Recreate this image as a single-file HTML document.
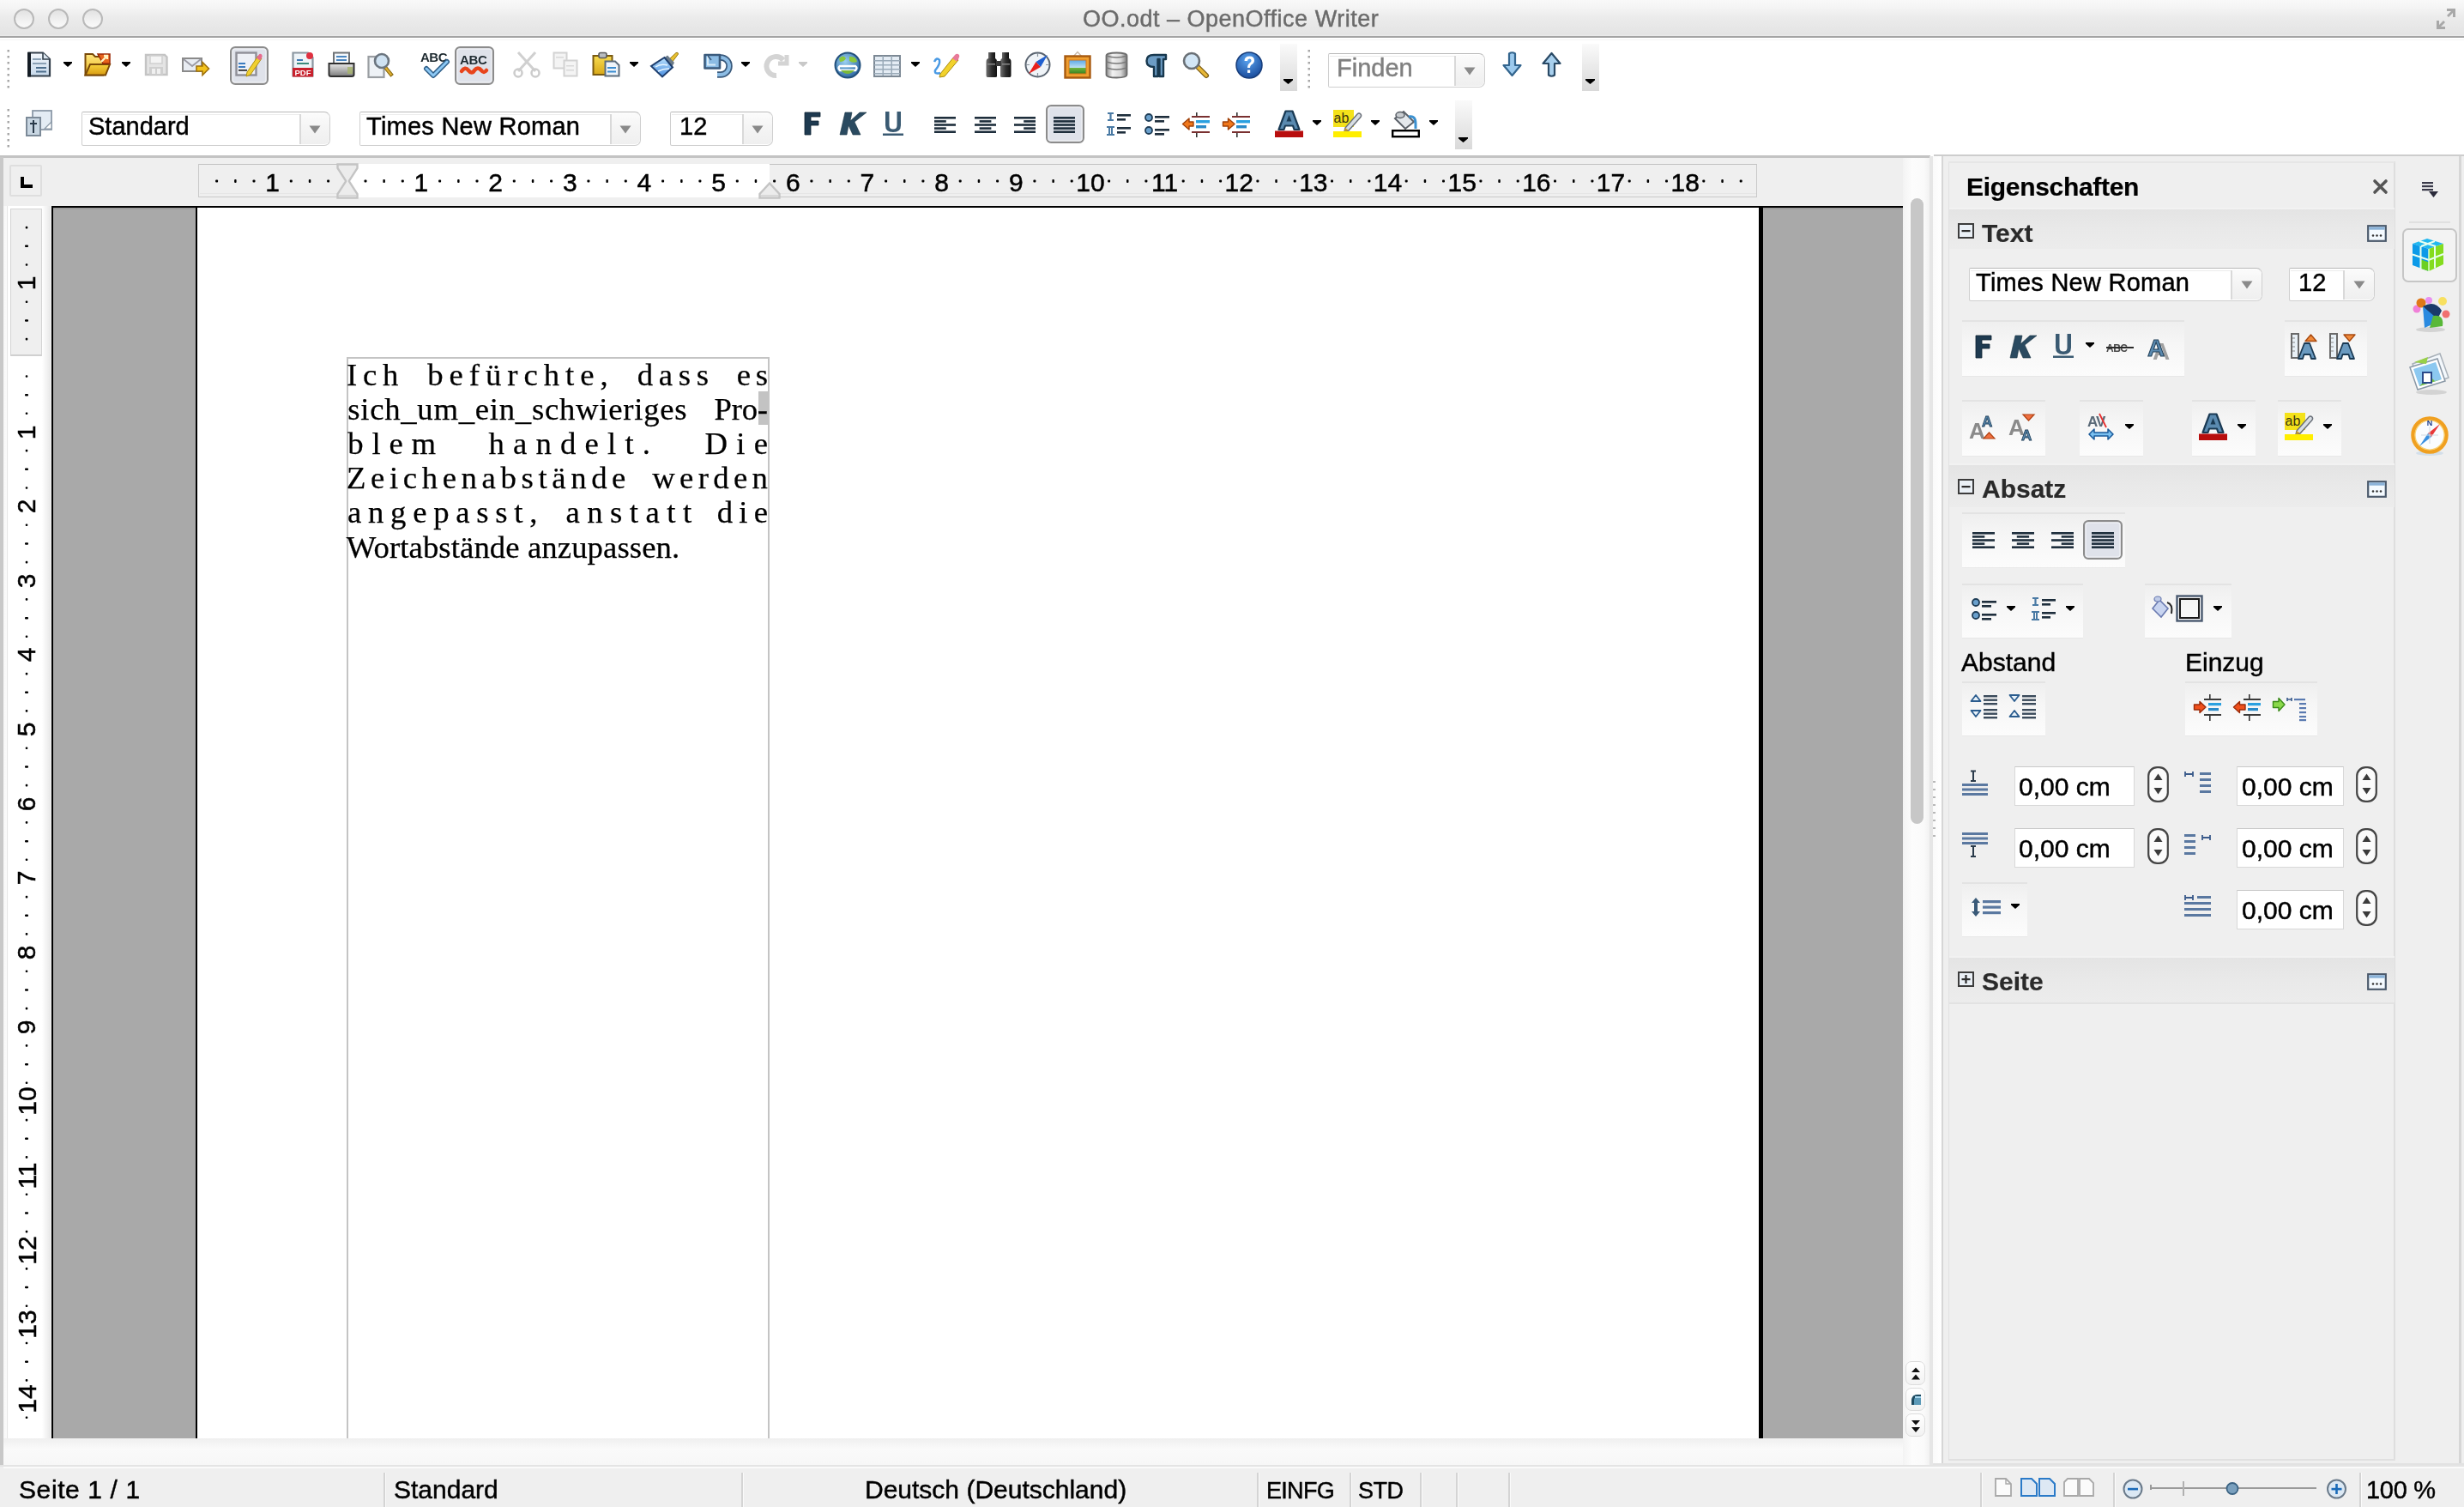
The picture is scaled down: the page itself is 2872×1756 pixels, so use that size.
<!DOCTYPE html>
<html><head><meta charset="utf-8">
<style>
*{box-sizing:border-box}
html,body{margin:0;padding:0}
body{width:2872px;height:1756px;overflow:hidden;position:relative;background:#fff;font-family:"Liberation Sans",sans-serif;color:#000}
.a{position:absolute}
svg.a{overflow:visible}
.t{position:absolute;white-space:nowrap;line-height:1}
</style></head><body>
<div class="a" style="left:0px;top:0px;width:2872px;height:42px;background:linear-gradient(#f9f9f9,#f3f3f3 25%,#ebebeb 50%,#e4e4e4 95%,#ebebeb)"></div>
<div class="a" style="left:0px;top:42px;width:2872px;height:2px;background:#a4a4a4"></div>
<div class="a" style="left:0px;top:46px;width:2872px;height:1px;background:#f4f4f4"></div>
<div class="a" style="left:16px;top:10px;width:24px;height:24px;border-radius:50%;border:2px solid #b9b9b9;background:linear-gradient(#e2e2e2,#f4f4f4 70%,#fafafa)"></div>
<div class="a" style="left:56px;top:10px;width:24px;height:24px;border-radius:50%;border:2px solid #b9b9b9;background:linear-gradient(#e2e2e2,#f4f4f4 70%,#fafafa)"></div>
<div class="a" style="left:96px;top:10px;width:24px;height:24px;border-radius:50%;border:2px solid #b9b9b9;background:linear-gradient(#e2e2e2,#f4f4f4 70%,#fafafa)"></div>
<div class="t" style="left:1262.00px;top:8.64px;font-size:27px;font-family:'Liberation Sans',sans-serif;font-weight:normal;color:#6b6b6b;letter-spacing:0.500px;-webkit-text-stroke:0.45px #6b6b6b;">OO.odt – OpenOffice Writer</div>
<svg class="a" style="left:2838px;top:8px;" width="26" height="28" viewBox="0 0 26 28"><path d="M2 26 L2 16 L5 16 L5 21 L10 16 L12 18 L7 23 L12 23 L12 26 Z" fill="#a8a8a8"/><path d="M24 2 L24 12 L21 12 L21 7 L16 12 L14 10 L19 5 L14 5 L14 2 Z" fill="#a8a8a8"/></svg>
<div class="a" style="left:0px;top:181px;width:2250px;height:3px;background:#c3c3c3"></div>
<div class="a" style="left:2254px;top:180px;width:618px;height:2px;background:#cdcdcd"></div>
<div class="a" style="left:0px;top:183px;width:4px;height:1524px;background:#c8c8c8"></div>
<div class="a" style="left:4px;top:184px;width:2214px;height:56px;background:#efefef"></div>
<div class="a" style="left:4px;top:240px;width:56px;height:1436px;background:linear-gradient(90deg,#f6f6f6,#ffffff 12%,#ffffff 80%,#ececec 95%,#e6e6e6 97%,#fafafa)"></div>
<div class="a" style="left:8px;top:240px;width:1px;height:1436px;background:#e6e6e6"></div>
<div class="a" style="left:60px;top:240px;width:2158px;height:2px;background:#000"></div>
<div class="a" style="left:60px;top:240px;width:2px;height:1436px;background:#000"></div>
<div class="a" style="left:62px;top:242px;width:2156px;height:1434px;background:#a9a9a9"></div>
<div class="a" style="left:62px;top:242px;width:2156px;height:2px;background:#9a9a9a"></div>
<div class="a" style="left:228px;top:242px;width:2px;height:1434px;background:#000"></div>
<div class="a" style="left:230px;top:242px;width:1820px;height:1434px;background:#fff"></div>
<div class="a" style="left:2050px;top:242px;width:5px;height:1434px;background:#000"></div>
<div class="a" style="left:404px;top:416px;width:1.5px;height:1260px;background:#c4c4c4"></div>
<div class="a" style="left:895px;top:416px;width:1.5px;height:1260px;background:#c4c4c4"></div>
<div class="a" style="left:404px;top:416px;width:492.5px;height:1.5px;background:#c4c4c4"></div>
<div class="a" style="left:2218px;top:184px;width:31px;height:1523px;background:linear-gradient(90deg,#f3f3f3,#fcfcfc 35%,#fafafa 80%,#f1f1f1)"></div>
<div class="a" style="left:2227px;top:231px;width:15px;height:729px;border-radius:8px;background:#c7c7c7"></div>
<div class="a" style="left:2221px;top:1586px;width:23px;height:28px;border-radius:7px;background:linear-gradient(#ffffff,#f2f2f2);border:1.5px solid #dcdcdc"></div>
<div class="a" style="left:2221px;top:1617px;width:23px;height:27px;border-radius:7px;background:linear-gradient(#ffffff,#f2f2f2);border:1.5px solid #dcdcdc"></div>
<div class="a" style="left:2221px;top:1647px;width:23px;height:27px;border-radius:7px;background:linear-gradient(#ffffff,#f2f2f2);border:1.5px solid #dcdcdc"></div>
<svg class="a" style="left:2227px;top:1593px;" width="12" height="16" viewBox="0 0 12 16"><path d="M6 0.5 L11 6 H1 Z M6 8.5 L11 14.5 H1 Z" fill="#111"/></svg>
<svg class="a" style="left:2227px;top:1623px;" width="13" height="15" viewBox="0 0 13 15"><path d="M1 14 L1 8 Q2 2 8 2 L12 2 L12 14 Z" fill="#5c9ab8"/><path d="M1 8 Q2 2 8 2 L12 2 L12 5 L7 5 Q4 5 4 9 L4 14 L1 14Z" fill="#1e4a60"/><rect x="5" y="4" width="7" height="2" fill="#a8d8f0"/></svg>
<svg class="a" style="left:2227px;top:1654px;" width="12" height="16" viewBox="0 0 12 16"><path d="M1 1 H11 L6 6.5 Z M1 9 H11 L6 15 Z" fill="#111"/></svg>
<div class="a" style="left:4px;top:1676px;width:2214px;height:31px;background:linear-gradient(#efefef,#fafafa 40%,#f7f7f7)"></div>
<div class="a" style="left:11px;top:192px;width:38px;height:37px;background:#efefef;border:2px solid #dedede;border-radius:2px"></div>
<svg class="a" style="left:23px;top:206px;" width="16" height="14" viewBox="0 0 16 14"><path d="M1 0 L5 0 L5 9 L15 9 L15 13 L1 13 Z" fill="#000"/></svg>
<div class="a" style="left:231px;top:190.5px;width:1817px;height:39px;background:#efefef;border:1.5px solid #c9c9c9;border-top-color:#c2c2c2"></div>
<div class="a" style="left:232.5px;top:224.5px;width:1814px;height:1px;background:#e6e6e6"></div>
<div class="a" style="left:405px;top:191px;width:492px;height:39px;background:#fff"></div>
<div class="t" style="left:309.30px;top:197.60px;font-size:30px;font-family:'Liberation Sans',sans-serif;font-weight:normal;color:#000;-webkit-text-stroke:0.5px #000;">1</div>
<div class="t" style="left:482.62px;top:197.60px;font-size:30px;font-family:'Liberation Sans',sans-serif;font-weight:normal;color:#000;-webkit-text-stroke:0.5px #000;">1</div>
<div class="t" style="left:569.28px;top:197.60px;font-size:30px;font-family:'Liberation Sans',sans-serif;font-weight:normal;color:#000;-webkit-text-stroke:0.5px #000;">2</div>
<div class="t" style="left:655.94px;top:197.60px;font-size:30px;font-family:'Liberation Sans',sans-serif;font-weight:normal;color:#000;-webkit-text-stroke:0.5px #000;">3</div>
<div class="t" style="left:742.60px;top:197.60px;font-size:30px;font-family:'Liberation Sans',sans-serif;font-weight:normal;color:#000;-webkit-text-stroke:0.5px #000;">4</div>
<div class="t" style="left:829.26px;top:197.60px;font-size:30px;font-family:'Liberation Sans',sans-serif;font-weight:normal;color:#000;-webkit-text-stroke:0.5px #000;">5</div>
<div class="t" style="left:915.92px;top:197.60px;font-size:30px;font-family:'Liberation Sans',sans-serif;font-weight:normal;color:#000;-webkit-text-stroke:0.5px #000;">6</div>
<div class="t" style="left:1002.58px;top:197.60px;font-size:30px;font-family:'Liberation Sans',sans-serif;font-weight:normal;color:#000;-webkit-text-stroke:0.5px #000;">7</div>
<div class="t" style="left:1089.24px;top:197.60px;font-size:30px;font-family:'Liberation Sans',sans-serif;font-weight:normal;color:#000;-webkit-text-stroke:0.5px #000;">8</div>
<div class="t" style="left:1175.90px;top:197.60px;font-size:30px;font-family:'Liberation Sans',sans-serif;font-weight:normal;color:#000;-webkit-text-stroke:0.5px #000;">9</div>
<div class="t" style="left:1254.22px;top:197.60px;font-size:30px;font-family:'Liberation Sans',sans-serif;font-weight:normal;color:#000;-webkit-text-stroke:0.5px #000;">10</div>
<div class="t" style="left:1341.99px;top:197.60px;font-size:30px;font-family:'Liberation Sans',sans-serif;font-weight:normal;color:#000;-webkit-text-stroke:0.5px #000;">11</div>
<div class="t" style="left:1427.54px;top:197.60px;font-size:30px;font-family:'Liberation Sans',sans-serif;font-weight:normal;color:#000;-webkit-text-stroke:0.5px #000;">12</div>
<div class="t" style="left:1514.20px;top:197.60px;font-size:30px;font-family:'Liberation Sans',sans-serif;font-weight:normal;color:#000;-webkit-text-stroke:0.5px #000;">13</div>
<div class="t" style="left:1600.86px;top:197.60px;font-size:30px;font-family:'Liberation Sans',sans-serif;font-weight:normal;color:#000;-webkit-text-stroke:0.5px #000;">14</div>
<div class="t" style="left:1687.52px;top:197.60px;font-size:30px;font-family:'Liberation Sans',sans-serif;font-weight:normal;color:#000;-webkit-text-stroke:0.5px #000;">15</div>
<div class="t" style="left:1774.18px;top:197.60px;font-size:30px;font-family:'Liberation Sans',sans-serif;font-weight:normal;color:#000;-webkit-text-stroke:0.5px #000;">16</div>
<div class="t" style="left:1860.84px;top:197.60px;font-size:30px;font-family:'Liberation Sans',sans-serif;font-weight:normal;color:#000;-webkit-text-stroke:0.5px #000;">17</div>
<div class="t" style="left:1947.50px;top:197.60px;font-size:30px;font-family:'Liberation Sans',sans-serif;font-weight:normal;color:#000;-webkit-text-stroke:0.5px #000;">18</div>
<svg class="a" style="left:231px;top:200px;" width="1817" height="22" viewBox="0 0 1817 22"><g fill="#000"><rect x="20.1" y="9.5" width="3" height="3" rx="1"/><rect x="42.1" y="9" width="2.5" height="4" rx="1"/><rect x="63.5" y="9.5" width="3" height="3" rx="1"/><rect x="106.8" y="9.5" width="3" height="3" rx="1"/><rect x="128.8" y="9" width="2.5" height="4" rx="1"/><rect x="150.1" y="9.5" width="3" height="3" rx="1"/><rect x="193.5" y="9.5" width="3" height="3" rx="1"/><rect x="215.4" y="9" width="2.5" height="4" rx="1"/><rect x="236.8" y="9.5" width="3" height="3" rx="1"/><rect x="280.1" y="9.5" width="3" height="3" rx="1"/><rect x="302.1" y="9" width="2.5" height="4" rx="1"/><rect x="323.5" y="9.5" width="3" height="3" rx="1"/><rect x="366.8" y="9.5" width="3" height="3" rx="1"/><rect x="388.8" y="9" width="2.5" height="4" rx="1"/><rect x="410.1" y="9.5" width="3" height="3" rx="1"/><rect x="453.4" y="9.5" width="3" height="3" rx="1"/><rect x="475.4" y="9" width="2.5" height="4" rx="1"/><rect x="496.8" y="9.5" width="3" height="3" rx="1"/><rect x="540.1" y="9.5" width="3" height="3" rx="1"/><rect x="562.1" y="9" width="2.5" height="4" rx="1"/><rect x="583.4" y="9.5" width="3" height="3" rx="1"/><rect x="626.8" y="9.5" width="3" height="3" rx="1"/><rect x="648.7" y="9" width="2.5" height="4" rx="1"/><rect x="670.1" y="9.5" width="3" height="3" rx="1"/><rect x="713.4" y="9.5" width="3" height="3" rx="1"/><rect x="735.4" y="9" width="2.5" height="4" rx="1"/><rect x="756.8" y="9.5" width="3" height="3" rx="1"/><rect x="800.1" y="9.5" width="3" height="3" rx="1"/><rect x="822.0" y="9" width="2.5" height="4" rx="1"/><rect x="843.4" y="9.5" width="3" height="3" rx="1"/><rect x="886.7" y="9.5" width="3" height="3" rx="1"/><rect x="908.7" y="9" width="2.5" height="4" rx="1"/><rect x="930.1" y="9.5" width="3" height="3" rx="1"/><rect x="973.4" y="9.5" width="3" height="3" rx="1"/><rect x="995.4" y="9" width="2.5" height="4" rx="1"/><rect x="1016.7" y="9.5" width="3" height="3" rx="1"/><rect x="1060.1" y="9.5" width="3" height="3" rx="1"/><rect x="1082.0" y="9" width="2.5" height="4" rx="1"/><rect x="1103.4" y="9.5" width="3" height="3" rx="1"/><rect x="1146.7" y="9.5" width="3" height="3" rx="1"/><rect x="1168.7" y="9" width="2.5" height="4" rx="1"/><rect x="1190.1" y="9.5" width="3" height="3" rx="1"/><rect x="1233.4" y="9.5" width="3" height="3" rx="1"/><rect x="1255.3" y="9" width="2.5" height="4" rx="1"/><rect x="1276.7" y="9.5" width="3" height="3" rx="1"/><rect x="1320.0" y="9.5" width="3" height="3" rx="1"/><rect x="1342.0" y="9" width="2.5" height="4" rx="1"/><rect x="1363.4" y="9.5" width="3" height="3" rx="1"/><rect x="1406.7" y="9.5" width="3" height="3" rx="1"/><rect x="1428.7" y="9" width="2.5" height="4" rx="1"/><rect x="1450.0" y="9.5" width="3" height="3" rx="1"/><rect x="1493.4" y="9.5" width="3" height="3" rx="1"/><rect x="1515.3" y="9" width="2.5" height="4" rx="1"/><rect x="1536.7" y="9.5" width="3" height="3" rx="1"/><rect x="1580.0" y="9.5" width="3" height="3" rx="1"/><rect x="1602.0" y="9" width="2.5" height="4" rx="1"/><rect x="1623.4" y="9.5" width="3" height="3" rx="1"/><rect x="1666.7" y="9.5" width="3" height="3" rx="1"/><rect x="1688.6" y="9" width="2.5" height="4" rx="1"/><rect x="1710.0" y="9.5" width="3" height="3" rx="1"/><rect x="1753.3" y="9.5" width="3" height="3" rx="1"/><rect x="1775.3" y="9" width="2.5" height="4" rx="1"/><rect x="1796.7" y="9.5" width="3" height="3" rx="1"/></g></svg>
<svg class="a" style="left:392px;top:190px;" width="26" height="42" viewBox="0 0 26 42"><path d="M1.5 1.5 L24.5 1.5 L24.5 6 L15 20.5 L15 21.5 L24.5 36 L24.5 40.5 L1.5 40.5 L1.5 36 L11 21.5 L11 20.5 L1.5 6 Z" fill="#ececec" stroke="#c4c4c4" stroke-width="2.4"/><path d="M3 37 L23 37 L23 40 L3 40 Z" fill="#d8d8d8"/></svg>
<svg class="a" style="left:884px;top:212px;" width="26" height="20" viewBox="0 0 26 20"><path d="M13 1.5 L24.5 14 L24.5 18.5 L1.5 18.5 L1.5 14 Z" fill="#ececec" stroke="#c4c4c4" stroke-width="2.4"/><path d="M3 15 L23 15 L23 18 L3 18 Z" fill="#d8d8d8"/></svg>
<div class="a" style="left:12px;top:243px;width:36.5px;height:172px;background:#efefef;border:1.5px solid #d4d4d4;border-bottom:2px solid #d0d0d0"></div>
<div class="t" style="left:23.2px;top:315.1px;font-size:30px;width:16.7px;height:30px;transform:rotate(-90deg);transform-origin:8.3px 15px;line-height:30px;-webkit-text-stroke:0.5px #000">1</div>
<div class="t" style="left:23.2px;top:488.5px;font-size:30px;width:16.7px;height:30px;transform:rotate(-90deg);transform-origin:8.3px 15px;line-height:30px;-webkit-text-stroke:0.5px #000">1</div>
<div class="t" style="left:23.2px;top:575.1px;font-size:30px;width:16.7px;height:30px;transform:rotate(-90deg);transform-origin:8.3px 15px;line-height:30px;-webkit-text-stroke:0.5px #000">2</div>
<div class="t" style="left:23.2px;top:661.8px;font-size:30px;width:16.7px;height:30px;transform:rotate(-90deg);transform-origin:8.3px 15px;line-height:30px;-webkit-text-stroke:0.5px #000">3</div>
<div class="t" style="left:23.2px;top:748.4px;font-size:30px;width:16.7px;height:30px;transform:rotate(-90deg);transform-origin:8.3px 15px;line-height:30px;-webkit-text-stroke:0.5px #000">4</div>
<div class="t" style="left:23.2px;top:835.1px;font-size:30px;width:16.7px;height:30px;transform:rotate(-90deg);transform-origin:8.3px 15px;line-height:30px;-webkit-text-stroke:0.5px #000">5</div>
<div class="t" style="left:23.2px;top:921.8px;font-size:30px;width:16.7px;height:30px;transform:rotate(-90deg);transform-origin:8.3px 15px;line-height:30px;-webkit-text-stroke:0.5px #000">6</div>
<div class="t" style="left:23.2px;top:1008.4px;font-size:30px;width:16.7px;height:30px;transform:rotate(-90deg);transform-origin:8.3px 15px;line-height:30px;-webkit-text-stroke:0.5px #000">7</div>
<div class="t" style="left:23.2px;top:1095.1px;font-size:30px;width:16.7px;height:30px;transform:rotate(-90deg);transform-origin:8.3px 15px;line-height:30px;-webkit-text-stroke:0.5px #000">8</div>
<div class="t" style="left:23.2px;top:1181.7px;font-size:30px;width:16.7px;height:30px;transform:rotate(-90deg);transform-origin:8.3px 15px;line-height:30px;-webkit-text-stroke:0.5px #000">9</div>
<div class="t" style="left:14.8px;top:1268.4px;font-size:30px;width:33.4px;height:30px;transform:rotate(-90deg);transform-origin:16.7px 15px;line-height:30px;-webkit-text-stroke:0.5px #000">10</div>
<div class="t" style="left:15.9px;top:1355.1px;font-size:30px;width:31.1px;height:30px;transform:rotate(-90deg);transform-origin:15.6px 15px;line-height:30px;-webkit-text-stroke:0.5px #000">11</div>
<div class="t" style="left:14.8px;top:1441.7px;font-size:30px;width:33.4px;height:30px;transform:rotate(-90deg);transform-origin:16.7px 15px;line-height:30px;-webkit-text-stroke:0.5px #000">12</div>
<div class="t" style="left:14.8px;top:1528.4px;font-size:30px;width:33.4px;height:30px;transform:rotate(-90deg);transform-origin:16.7px 15px;line-height:30px;-webkit-text-stroke:0.5px #000">13</div>
<div class="t" style="left:14.8px;top:1615.0px;font-size:30px;width:33.4px;height:30px;transform:rotate(-90deg);transform-origin:16.7px 15px;line-height:30px;-webkit-text-stroke:0.5px #000">14</div>
<svg class="a" style="left:20px;top:243px;" width="22" height="1433" viewBox="0 0 22 1433"><g fill="#000"><rect x="9.7" y="20.8" width="2.6" height="2.6" rx="1"/><rect x="9" y="42.6" width="4" height="2.5" rx="1"/><rect x="9.7" y="64.2" width="2.6" height="2.6" rx="1"/><rect x="9.7" y="107.5" width="2.6" height="2.6" rx="1"/><rect x="9" y="129.3" width="4" height="2.5" rx="1"/><rect x="9.7" y="150.8" width="2.6" height="2.6" rx="1"/><rect x="9.7" y="194.2" width="2.6" height="2.6" rx="1"/><rect x="9" y="215.9" width="4" height="2.5" rx="1"/><rect x="9.7" y="237.5" width="2.6" height="2.6" rx="1"/><rect x="9.7" y="280.8" width="2.6" height="2.6" rx="1"/><rect x="9" y="302.6" width="4" height="2.5" rx="1"/><rect x="9.7" y="324.2" width="2.6" height="2.6" rx="1"/><rect x="9.7" y="367.5" width="2.6" height="2.6" rx="1"/><rect x="9" y="389.2" width="4" height="2.5" rx="1"/><rect x="9.7" y="410.8" width="2.6" height="2.6" rx="1"/><rect x="9.7" y="454.1" width="2.6" height="2.6" rx="1"/><rect x="9" y="475.9" width="4" height="2.5" rx="1"/><rect x="9.7" y="497.5" width="2.6" height="2.6" rx="1"/><rect x="9.7" y="540.8" width="2.6" height="2.6" rx="1"/><rect x="9" y="562.6" width="4" height="2.5" rx="1"/><rect x="9.7" y="584.1" width="2.6" height="2.6" rx="1"/><rect x="9.7" y="627.5" width="2.6" height="2.6" rx="1"/><rect x="9" y="649.2" width="4" height="2.5" rx="1"/><rect x="9.7" y="670.8" width="2.6" height="2.6" rx="1"/><rect x="9.7" y="714.1" width="2.6" height="2.6" rx="1"/><rect x="9" y="735.9" width="4" height="2.5" rx="1"/><rect x="9.7" y="757.5" width="2.6" height="2.6" rx="1"/><rect x="9.7" y="800.8" width="2.6" height="2.6" rx="1"/><rect x="9" y="822.5" width="4" height="2.5" rx="1"/><rect x="9.7" y="844.1" width="2.6" height="2.6" rx="1"/><rect x="9.7" y="887.4" width="2.6" height="2.6" rx="1"/><rect x="9" y="909.2" width="4" height="2.5" rx="1"/><rect x="9.7" y="930.8" width="2.6" height="2.6" rx="1"/><rect x="9.7" y="974.1" width="2.6" height="2.6" rx="1"/><rect x="9" y="995.9" width="4" height="2.5" rx="1"/><rect x="9.7" y="1017.4" width="2.6" height="2.6" rx="1"/><rect x="9.7" y="1060.8" width="2.6" height="2.6" rx="1"/><rect x="9" y="1082.5" width="4" height="2.5" rx="1"/><rect x="9.7" y="1104.1" width="2.6" height="2.6" rx="1"/><rect x="9.7" y="1147.4" width="2.6" height="2.6" rx="1"/><rect x="9" y="1169.2" width="4" height="2.5" rx="1"/><rect x="9.7" y="1190.8" width="2.6" height="2.6" rx="1"/><rect x="9.7" y="1234.1" width="2.6" height="2.6" rx="1"/><rect x="9" y="1255.8" width="4" height="2.5" rx="1"/><rect x="9.7" y="1277.4" width="2.6" height="2.6" rx="1"/><rect x="9.7" y="1320.7" width="2.6" height="2.6" rx="1"/><rect x="9" y="1342.5" width="4" height="2.5" rx="1"/><rect x="9.7" y="1364.1" width="2.6" height="2.6" rx="1"/><rect x="9.7" y="1407.4" width="2.6" height="2.6" rx="1"/></g></svg>
<div class="t" style="left:404.10px;top:418.57px;font-size:36.7px;font-family:'Liberation Serif',serif;font-weight:normal;color:#000;letter-spacing:6.700px;-webkit-text-stroke:0.25px #000;">Ich</div>
<div class="t" style="left:498.30px;top:418.57px;font-size:36.7px;font-family:'Liberation Serif',serif;font-weight:normal;color:#000;letter-spacing:6.967px;-webkit-text-stroke:0.25px #000;">befürchte,</div>
<div class="t" style="left:742.70px;top:418.57px;font-size:36.7px;font-family:'Liberation Serif',serif;font-weight:normal;color:#000;letter-spacing:6.700px;-webkit-text-stroke:0.25px #000;">dass</div>
<div class="t" style="left:858.80px;top:418.57px;font-size:36.7px;font-family:'Liberation Serif',serif;font-weight:normal;color:#000;letter-spacing:5.600px;-webkit-text-stroke:0.25px #000;">es</div>
<div class="t" style="left:405.20px;top:458.87px;font-size:36.7px;font-family:'Liberation Serif',serif;font-weight:normal;color:#000;letter-spacing:0.745px;-webkit-text-stroke:0.25px #000;">sich_um_ein_schwieriges</div>
<div class="t" style="left:832.60px;top:458.87px;font-size:36.7px;font-family:'Liberation Serif',serif;font-weight:normal;color:#000;letter-spacing:-0.267px;-webkit-text-stroke:0.25px #000;">Pro-</div>
<div class="t" style="left:405.20px;top:498.87px;font-size:36.7px;font-family:'Liberation Serif',serif;font-weight:normal;color:#000;letter-spacing:9.867px;-webkit-text-stroke:0.25px #000;">blem</div>
<div class="t" style="left:569.60px;top:498.87px;font-size:36.7px;font-family:'Liberation Serif',serif;font-weight:normal;color:#000;letter-spacing:10.171px;-webkit-text-stroke:0.25px #000;">handelt.</div>
<div class="t" style="left:821.60px;top:498.87px;font-size:36.7px;font-family:'Liberation Serif',serif;font-weight:normal;color:#000;letter-spacing:10.200px;-webkit-text-stroke:0.25px #000;">Die</div>
<div class="t" style="left:404.00px;top:539.17px;font-size:36.7px;font-family:'Liberation Serif',serif;font-weight:normal;color:#000;letter-spacing:5.636px;-webkit-text-stroke:0.25px #000;">Zeichenabstände</div>
<div class="t" style="left:760.20px;top:539.17px;font-size:36.7px;font-family:'Liberation Serif',serif;font-weight:normal;color:#000;letter-spacing:5.360px;-webkit-text-stroke:0.25px #000;">werden</div>
<div class="t" style="left:405.00px;top:579.47px;font-size:36.7px;font-family:'Liberation Serif',serif;font-weight:normal;color:#000;letter-spacing:7.733px;-webkit-text-stroke:0.25px #000;">angepasst,</div>
<div class="t" style="left:659.40px;top:579.47px;font-size:36.7px;font-family:'Liberation Serif',serif;font-weight:normal;color:#000;letter-spacing:8.517px;-webkit-text-stroke:0.25px #000;">anstatt</div>
<div class="t" style="left:835.80px;top:579.47px;font-size:36.7px;font-family:'Liberation Serif',serif;font-weight:normal;color:#000;letter-spacing:7.200px;-webkit-text-stroke:0.25px #000;">die</div>
<div class="a" style="left:884px;top:456px;width:11px;height:39px;background:#c3c3c3;mix-blend-mode:multiply"></div>
<div class="t" style="left:403.70px;top:619.87px;font-size:36.7px;font-family:'Liberation Serif',serif;font-weight:normal;color:#000;letter-spacing:0.100px;-webkit-text-stroke:0.25px #000;">Wortabstände anzupassen.</div>
<svg class="a" style="left:8px;top:58px;" width="3" height="44" viewBox="0 0 3 44"><rect x="0.5" y="0" width="2.5" height="2.5" fill="#a8a8a8"/><rect x="0.5" y="7" width="2.5" height="2.5" fill="#a8a8a8"/><rect x="0.5" y="14" width="2.5" height="2.5" fill="#a8a8a8"/><rect x="0.5" y="21" width="2.5" height="2.5" fill="#a8a8a8"/><rect x="0.5" y="28" width="2.5" height="2.5" fill="#a8a8a8"/><rect x="0.5" y="35" width="2.5" height="2.5" fill="#a8a8a8"/><rect x="0.5" y="42" width="2.5" height="2.5" fill="#a8a8a8"/></svg>
<svg class="a" style="left:32px;top:60px;" width="28" height="30" viewBox="0 0 28 30"><defs><linearGradient id="g1" x1="0" y1="0" x2="0" y2="1"><stop offset="0" stop-color="#f4f8fc"/><stop offset="1" stop-color="#c6d8ea"/></linearGradient></defs><path d="M1.5 1.5 H18 L26 9 V28.5 H1.5 Z" fill="url(#g1)" stroke="#34404c" stroke-width="2.2"/><path d="M18 1.5 V9 H26" fill="#dbe6f0" stroke="#34404c" stroke-width="1.6"/><rect x="0" y="1" width="4" height="28.5" fill="#141c24"/><rect x="6" y="8" width="10" height="2" fill="#8aa0b4"/><rect x="6" y="13" width="16" height="2" fill="#8aa0b4"/><rect x="10" y="18" width="12" height="2" fill="#4d6e8c"/><rect x="10" y="22.5" width="12" height="2" fill="#4d6e8c"/></svg>
<svg class="a" style="left:74px;top:72px;" width="10" height="6" viewBox="0 0 10 6"><path d="M0 0 H10 V1.5 L5 6 L0 1.5 Z" fill="#000"/></svg>
<svg class="a" style="left:98px;top:60px;" width="32" height="30" viewBox="0 0 32 30"><defs><linearGradient id="g2" x1="0" y1="0" x2="0" y2="1"><stop offset="0" stop-color="#ffe680"/><stop offset="1" stop-color="#e9b820"/></linearGradient><linearGradient id="g3" x1="0" y1="0" x2="0" y2="1"><stop offset="0" stop-color="#f6d23c"/><stop offset="1" stop-color="#d99c12"/></linearGradient></defs><path d="M1.5 3 H10 L13 6 H22 V27.5 H1.5 Z" fill="url(#g2)" stroke="#7a4a08" stroke-width="2"/><path d="M1.5 27.5 L7 15 H30 L25 27.5 Z" fill="url(#g3)" stroke="#7a4a08" stroke-width="2"/><path d="M16 3 H30 V14 H22 Z" fill="#e8641c" stroke="#9a2a08" stroke-width="1.5"/><path d="M20 12 L27 5 M23 5 H27 V9" stroke="#fff2c0" stroke-width="2.4" fill="none"/></svg>
<svg class="a" style="left:142px;top:72px;" width="10" height="6" viewBox="0 0 10 6"><path d="M0 0 H10 V1.5 L5 6 L0 1.5 Z" fill="#000"/></svg>
<svg class="a" style="left:168px;top:62px;" width="28" height="27" viewBox="0 0 28 27"><path d="M2 2 H24 L26.5 4.5 V25 H2 Z" fill="#e4e4e4" stroke="#c4c4c4" stroke-width="2.4"/><rect x="7" y="3" width="14" height="9" fill="#f4f4f4" stroke="#cfcfcf" stroke-width="1.5"/><rect x="6" y="16" width="16" height="9" fill="#cfcfcf"/><rect x="9" y="18" width="4" height="6" fill="#f0f0f0"/><rect x="15" y="18" width="4" height="6" fill="#f0f0f0"/></svg>
<svg class="a" style="left:212px;top:67px;" width="32" height="22" viewBox="0 0 32 22"><rect x="1" y="1" width="22" height="15" fill="#e8ecf2" stroke="#8a8a8a" stroke-width="2"/><path d="M2 2 L12 10 L22 2" fill="none" stroke="#9a9aa4" stroke-width="1.8"/><path d="M17 10 H24 V5.5 L31.5 13 L24 20.5 V16 H17 Z" fill="#f2c21c" stroke="#a0720c" stroke-width="1.6"/></svg>
<svg class="a" style="left:268px;top:54px;" width="45" height="45" viewBox="0 0 45 45"><rect x="1.2" y="1.2" width="42.6" height="42.6" rx="5" fill="#dfe2ea" stroke="#8c8c8c" stroke-width="2.4"/><rect x="3" y="3" width="39" height="39" rx="3" fill="none" stroke="#eef0f4" stroke-width="1.5"/></svg>
<svg class="a" style="left:274px;top:60px;" width="32" height="30" viewBox="0 0 32 30"><rect x="1.5" y="1.5" width="23" height="26" fill="#eef0f6" stroke="#8f8f98" stroke-width="2.4"/><rect x="4" y="13" width="8" height="2" fill="#3c7cc0"/><rect x="4" y="17" width="8" height="2" fill="#3c7cc0"/><rect x="4" y="21" width="10" height="1.8" fill="#333"/><path d="M14 24 L27 5 L31 8 L18 27 L13 29 Z" fill="#f0d030" stroke="#b09010" stroke-width="1"/><path d="M25 7.5 L27.5 4 Q29 2 31 3.5 Q32.5 5 31 7.5 L29 10.5 Z" fill="#e76b8e"/></svg>
<svg class="a" style="left:340px;top:60px;" width="26" height="30" viewBox="0 0 26 30"><path d="M1.5 1.5 H19 L24.5 7 V28.5 H1.5 Z" fill="#eef4f8" stroke="#8a96a0" stroke-width="2.2"/><circle cx="21" cy="5" r="4" fill="#e03040"/><rect x="6" y="9" width="7" height="2" fill="#3c78b4"/><rect x="6" y="13" width="14" height="2" fill="#3a8a7c"/><rect x="1" y="19" width="24" height="10.5" fill="#c8202c"/><text x="13" y="28" font-family="Liberation Sans" font-weight="bold" font-size="9.5" fill="#fff" text-anchor="middle">PDF</text></svg>
<svg class="a" style="left:382px;top:60px;" width="32" height="30" viewBox="0 0 32 30"><defs><linearGradient id="g4" x1="0" y1="0" x2="0" y2="1"><stop offset="0" stop-color="#e8e8e8"/><stop offset="0.5" stop-color="#b4b4b4"/><stop offset="1" stop-color="#7a7a7a"/></linearGradient></defs><rect x="7" y="1.5" width="18" height="14" fill="#f4f8fc" stroke="#6e7276" stroke-width="2"/><rect x="10" y="5" width="12" height="2" fill="#4a86c0"/><rect x="10" y="9" width="12" height="2" fill="#4a86c0"/><path d="M1.5 14 H30.5 V27 Q30.5 29 28 29 H4 Q1.5 29 1.5 27 Z" fill="url(#g4)" stroke="#303030" stroke-width="2"/><rect x="23" y="18" width="6" height="8" fill="#a6b46a" opacity="0.8"/></svg>
<svg class="a" style="left:428px;top:61px;" width="32" height="30" viewBox="0 0 32 30"><rect x="1.5" y="5" width="18" height="24" fill="#eef2f6" stroke="#9a9ea2" stroke-width="2.2"/><path d="M22 16 L30 26 L27.5 28 L19.5 18 Z" fill="#e0b030" stroke="#8a6a10" stroke-width="1.2"/><circle cx="17" cy="10" r="8" fill="#cfe2f2" stroke="#6c7680" stroke-width="2.6"/></svg>
<svg class="a" style="left:490px;top:60px;" width="32" height="30" viewBox="0 0 32 30"><text x="0" y="12" font-family="Liberation Sans" font-weight="bold" font-size="15" fill="#1e2a30" letter-spacing="-0.5">ABC</text><path d="M7 20 L15 28 L31 12" fill="none" stroke="#2c5c86" stroke-width="6" stroke-linejoin="round" stroke-linecap="round"/><path d="M7 20 L15 28 L31 12" fill="none" stroke="#8cc8f4" stroke-width="3" stroke-linejoin="round" stroke-linecap="round"/></svg>
<svg class="a" style="left:530px;top:54px;" width="46" height="45" viewBox="0 0 46 45"><rect x="1.2" y="1.2" width="43.6" height="42.6" rx="5" fill="#dfe2ea" stroke="#8c8c8c" stroke-width="2.4"/><rect x="3" y="3" width="40" height="39" rx="3" fill="none" stroke="#eef0f4" stroke-width="1.5"/></svg>
<svg class="a" style="left:536px;top:63px;" width="32" height="26" viewBox="0 0 32 26"><text x="0" y="12" font-family="Liberation Sans" font-weight="bold" font-size="15" fill="#1e2a30" letter-spacing="-0.3">ABC</text><path d="M2 20 Q6 14 10 19 Q14 24 17 19 Q21 14 25 19 Q28 23 31 19" fill="none" stroke="#e8441c" stroke-width="4.5" stroke-linecap="round"/></svg>
<svg class="a" style="left:598px;top:59px;" width="32" height="32" viewBox="0 0 32 32"><path d="M6 2 L26 24 M26 2 L6 24" stroke="#d0d0d0" stroke-width="3"/><circle cx="6" cy="26" r="4.5" fill="none" stroke="#cccccc" stroke-width="2.5"/><circle cx="26" cy="26" r="4.5" fill="none" stroke="#cccccc" stroke-width="2.5"/></svg>
<svg class="a" style="left:644px;top:60px;" width="30" height="30" viewBox="0 0 30 30"><rect x="1.5" y="1.5" width="15" height="18" fill="#f4f4f4" stroke="#d2d2d2" stroke-width="2"/><rect x="13.5" y="10.5" width="15" height="18" fill="#f4f4f4" stroke="#d2d2d2" stroke-width="2"/><rect x="4" y="6" width="9" height="1.5" fill="#d8d8d8"/><rect x="16" y="16" width="9" height="1.5" fill="#d8d8d8"/><rect x="16" y="21" width="9" height="1.5" fill="#d8d8d8"/></svg>
<svg class="a" style="left:690px;top:60px;" width="33" height="30" viewBox="0 0 33 30"><defs><linearGradient id="g5" x1="0" y1="0" x2="0" y2="1"><stop offset="0" stop-color="#f8dc50"/><stop offset="1" stop-color="#d8a818"/></linearGradient></defs><rect x="1.5" y="5" width="22" height="22" fill="url(#g5)" stroke="#7a5a10" stroke-width="2"/><rect x="8" y="1.5" width="9" height="6" rx="2" fill="#b8bcc0" stroke="#5a5a5a" stroke-width="1.6"/><path d="M15.5 11.5 H27 L31.5 16 V28.5 H15.5 Z" fill="#eef4fa" stroke="#5c6c7c" stroke-width="2"/><rect x="18" y="18" width="10" height="2" fill="#3a8cd0"/><rect x="18" y="22.5" width="10" height="2" fill="#3a8cd0"/></svg>
<svg class="a" style="left:734px;top:72px;" width="10" height="6" viewBox="0 0 10 6"><path d="M0 0 H10 V1.5 L5 6 L0 1.5 Z" fill="#000"/></svg>
<svg class="a" style="left:758px;top:60px;" width="33" height="31" viewBox="0 0 33 31"><defs><linearGradient id="g6" x1="0" y1="0" x2="0" y2="1"><stop offset="0" stop-color="#b8e0fc"/><stop offset="1" stop-color="#4a8ee0"/></linearGradient></defs><path d="M21 10 L30 1.5 Q32.5 0.5 32.5 3 L25 13 Z" fill="#e8c030" stroke="#9a7a10" stroke-width="1"/><path d="M16 7.5 L20 4.5 L28 13 L25.5 17.5 Z" fill="#6a7a88"/><path d="M1 17 L16.5 7 L26 18.5 L14 29.5 Z" fill="url(#g6)" stroke="#1e3e6e" stroke-width="2"/><path d="M6 18 Q12 14 20 16 M9 23 Q15 20 22 20" stroke="#e8f6ff" stroke-width="1.5" fill="none"/></svg>
<svg class="a" style="left:820px;top:60px;" width="33" height="30" viewBox="0 0 33 30"><path d="M12 7 H20 A10 10 0 0 1 20 27 H16" fill="none" stroke="#3a5a7c" stroke-width="7.5"/><path d="M12 7 H20 A10 10 0 0 1 20 27 H16" fill="none" stroke="#8cbce4" stroke-width="4"/><path d="M1.5 4 H19 L19 19.5 H1.5 Z" fill="#8cbce4" stroke="#3a5a7c" stroke-width="2.6" stroke-linejoin="round"/><path d="M5 5 L5 15.5 L14 15.5" fill="none" stroke="#d8ecfa" stroke-width="2"/><path d="M5 5 L9 10" stroke="#3a5a7c" stroke-width="1.6"/></svg>
<svg class="a" style="left:864px;top:72px;" width="10" height="6" viewBox="0 0 10 6"><path d="M0 0 H10 V1.5 L5 6 L0 1.5 Z" fill="#000"/></svg>
<svg class="a" style="left:888px;top:60px;" width="32" height="30" viewBox="0 0 32 30"><path d="M29 4 V14 H19" fill="none" stroke="#d4d4d4" stroke-width="5"/><path d="M25 10 A11 11 0 1 0 17 28" fill="none" stroke="#d4d4d4" stroke-width="6"/></svg>
<svg class="a" style="left:931px;top:72px;" width="10" height="6" viewBox="0 0 10 6"><path d="M0 0 H10 V1.5 L5 6 L0 1.5 Z" fill="#c8c8c8"/></svg>
<svg class="a" style="left:972px;top:60px;" width="32" height="32" viewBox="0 0 32 32"><defs><radialGradient id="g7" cx="0.4" cy="0.35" r="0.7"><stop offset="0" stop-color="#9ad0f0"/><stop offset="1" stop-color="#2a64a0"/></radialGradient></defs><circle cx="16" cy="16" r="14.5" fill="url(#g7)" stroke="#23507c" stroke-width="2"/><path d="M6 8 Q11 3 14 8 Q12 12 7 12 Z M18 6 Q26 5 27 12 Q22 14 18 11 Z" fill="#8cc83a"/><path d="M7 17 H25 Q28 19 25 22 H7 Q4 19 7 17 Z" fill="none" stroke="#ffffff" stroke-width="2.5"/><path d="M8 22 Q16 30 24 22" fill="#7ab838"/></svg>
<svg class="a" style="left:1018px;top:64px;" width="32" height="26" viewBox="0 0 32 26"><rect x="1" y="1" width="30" height="24" fill="#e4ecf4" stroke="#7c8894" stroke-width="2"/><rect x="1" y="6" width="30" height="1.5" fill="#9aaab8"/><rect x="1" y="11" width="30" height="1.5" fill="#9aaab8"/><rect x="1" y="16" width="30" height="1.5" fill="#9aaab8"/><rect x="1" y="21" width="30" height="1.5" fill="#9aaab8"/><rect x="10.5" y="1" width="1.5" height="23" fill="#9aaab8"/><rect x="20.5" y="1" width="1.5" height="23" fill="#9aaab8"/></svg>
<svg class="a" style="left:1062px;top:72px;" width="10" height="6" viewBox="0 0 10 6"><path d="M0 0 H10 V1.5 L5 6 L0 1.5 Z" fill="#000"/></svg>
<svg class="a" style="left:1086px;top:60px;" width="33" height="30" viewBox="0 0 33 30"><path d="M3 12 Q6 6 9 10 Q10 15 4 22 Q3 27 10 25" fill="none" stroke="#4a9ae4" stroke-width="2.5"/><path d="M10 26 L26 6 L31 10 L15 29 L9 30 Z" fill="#f2d22c" stroke="#a88a10" stroke-width="1"/><path d="M24 8 L27 4 Q29.5 1.5 32 4 Q33 6 31 9 L29 11.5 Z" fill="#e87a9a"/></svg>
<svg class="a" style="left:1148px;top:60px;" width="32" height="31" viewBox="0 0 32 31"><defs><linearGradient id="g8" x1="0" y1="0" x2="1" y2="0"><stop offset="0" stop-color="#707070"/><stop offset="0.5" stop-color="#303030"/><stop offset="1" stop-color="#101010"/></linearGradient></defs><rect x="4" y="1" width="8" height="8" fill="url(#g8)"/><rect x="20" y="1" width="8" height="8" fill="url(#g8)"/><path d="M1.5 12 Q1.5 8 5 8 H11 Q14 8 14 12 V29 Q14 30 12 30 H3 Q1.5 30 1.5 28 Z" fill="url(#g8)"/><path d="M18 12 Q18 8 21 8 H27 Q30.5 8 30.5 12 V28 Q30.5 30 29 30 H20 Q18 30 18 29 Z" fill="url(#g8)"/><rect x="13" y="11" width="6" height="6" fill="#3a3a3a"/><rect x="3" y="14" width="9" height="1.5" fill="#888"/><rect x="20" y="14" width="9" height="1.5" fill="#888"/></svg>
<svg class="a" style="left:1194px;top:60px;" width="31" height="31" viewBox="0 0 31 31"><circle cx="15.5" cy="15.5" r="14" fill="#f0f4f8" stroke="#5a6470" stroke-width="2"/><path d="M4 27 L18 13 L14 17 Z" fill="#e02020"/><path d="M5 26 L13.5 12 L19 18 Z" fill="#e8201c"/><path d="M27 4 L13.5 12 L19 18 Z" fill="#2060d0"/><path d="M15.5 2 V6 M15.5 25 V29 M2 15.5 H6 M25 15.5 H29" stroke="#8a949e" stroke-width="1.2"/></svg>
<svg class="a" style="left:1240px;top:59px;" width="32" height="33" viewBox="0 0 32 33"><defs><linearGradient id="g9" x1="0" y1="0" x2="0" y2="1"><stop offset="0" stop-color="#5aa8e8"/><stop offset="0.55" stop-color="#bfe0f0"/><stop offset="0.56" stop-color="#70b840"/><stop offset="1" stop-color="#3a8020"/></linearGradient></defs><path d="M11 7 L16 1.5 L21 7" fill="none" stroke="#c8b8a8" stroke-width="1.5"/><rect x="1.5" y="6.5" width="29" height="25" fill="#f0a030" stroke="#a85a10" stroke-width="2.4"/><rect x="6" y="11" width="20" height="16" fill="url(#g9)" stroke="#d87818" stroke-width="1"/></svg>
<svg class="a" style="left:1288px;top:60px;" width="27" height="32" viewBox="0 0 27 32"><defs><linearGradient id="g10" x1="0" y1="0" x2="1" y2="0"><stop offset="0" stop-color="#8c8c8c"/><stop offset="0.3" stop-color="#f2f2f2"/><stop offset="0.7" stop-color="#d8d8d8"/><stop offset="1" stop-color="#7a7a7a"/></linearGradient></defs><path d="M1.5 5 Q1.5 1.5 13.5 1.5 Q25.5 1.5 25.5 5 V27 Q25.5 30.5 13.5 30.5 Q1.5 30.5 1.5 27 Z" fill="url(#g10)" stroke="#6c6c6c" stroke-width="1.8"/><path d="M1.5 5 Q13.5 9 25.5 5 M1.5 12 Q13.5 16 25.5 12 M1.5 19 Q13.5 23 25.5 19" fill="none" stroke="#7a7a7a" stroke-width="1.5"/></svg>
<svg class="a" style="left:1335px;top:62px;" width="26" height="28" viewBox="0 0 26 28"><path d="M10 2 H24 V7 H21 V27 H16.5 V7 H14.5 V27 H10 V16 Q1.5 16 1.5 9 Q1.5 2 10 2 Z" fill="#6c9cc4" stroke="#18384e" stroke-width="2.4" stroke-linejoin="round"/></svg>
<svg class="a" style="left:1378px;top:60px;" width="31" height="31" viewBox="0 0 31 31"><path d="M17 17 L28 28" stroke="#7a5a10" stroke-width="6" stroke-linecap="round"/><path d="M17 17 L28 28" stroke="#e8b838" stroke-width="3.5" stroke-linecap="round"/><circle cx="11" cy="11" r="9" fill="#d2e6f6" stroke="#6a7076" stroke-width="2.6"/></svg>
<svg class="a" style="left:1440px;top:60px;" width="32" height="32" viewBox="0 0 32 32"><defs><radialGradient id="g11" cx="0.45" cy="0.3" r="0.7"><stop offset="0" stop-color="#5aa4f0"/><stop offset="1" stop-color="#1a4c9c"/></radialGradient></defs><circle cx="16" cy="16" r="15" fill="url(#g11)" stroke="#163c7a" stroke-width="1.5"/><path d="M10.5 11 Q10.5 5.5 16.5 5.5 Q22 5.5 22 10.5 Q22 13.5 18.5 15.5 Q17 16.5 17 19 H14 Q14 15 17 13 Q18.5 12 18.5 10.5 Q18.5 8.5 16.3 8.5 Q14 8.5 14 11 Z" fill="#fff"/><rect x="14" y="21.5" width="3.2" height="3.4" fill="#fff"/></svg>
<svg class="a" style="left:1492px;top:51px;" width="20" height="55" viewBox="0 0 20 55"><defs><linearGradient id="g12" x1="0" y1="0" x2="0" y2="1"><stop offset="0" stop-color="#fafafa"/><stop offset="1" stop-color="#d9d9d9"/></linearGradient></defs><rect x="0" y="0" width="20" height="55" fill="url(#g12)"/><path d="M4 41 H15 V42.5 L9.5 47 L4 42.5 Z" fill="#000"/></svg>
<svg class="a" style="left:1524px;top:58px;" width="3" height="44" viewBox="0 0 3 44"><rect x="0.5" y="0" width="2.5" height="2.5" fill="#a8a8a8"/><rect x="0.5" y="7" width="2.5" height="2.5" fill="#a8a8a8"/><rect x="0.5" y="14" width="2.5" height="2.5" fill="#a8a8a8"/><rect x="0.5" y="21" width="2.5" height="2.5" fill="#a8a8a8"/><rect x="0.5" y="28" width="2.5" height="2.5" fill="#a8a8a8"/><rect x="0.5" y="35" width="2.5" height="2.5" fill="#a8a8a8"/><rect x="0.5" y="42" width="2.5" height="2.5" fill="#a8a8a8"/></svg>
<div class="a" style="left:1548px;top:62px;width:183px;height:40px;background:#fff;border:1.5px solid #cfcfcf;border-top-color:#b9b9b9;border-radius:2px 7px 7px 2px"></div>
<div class="a" style="left:1550px;top:65px;width:179px;height:1px;background:#ececec"></div>
<div class="a" style="left:1697px;top:64px;width:32.5px;height:36px;background:linear-gradient(#fbfbfb,#f3f3f3 60%,#efefef);border-radius:0 6px 6px 0"></div>
<div class="a" style="left:1695px;top:65px;width:2px;height:35px;background:#d9d9d9"></div>
<svg class="a" style="left:1706.0px;top:77.5px;" width="14" height="10" viewBox="0 0 14 10"><path d="M0.5 0.5 H13.5 L7 9.5 Z" fill="#8a8a8a"/></svg>
<div class="t" style="left:1558.00px;top:64.95px;font-size:29px;font-family:'Liberation Sans',sans-serif;font-weight:normal;color:#808080;-webkit-text-stroke:0.45px #808080;">Finden</div>
<svg class="a" style="left:1750px;top:60px;" width="25" height="30" viewBox="0 0 25 30"><path d="M9 2.5 Q12.5 0 16 2.5 V16 H22.5 L12.5 28 L2.5 16 H9 Z" fill="#9ccaee" stroke="#33658e" stroke-width="2.2" stroke-linejoin="round"/></svg>
<svg class="a" style="left:1796px;top:60px;" width="25" height="30" viewBox="0 0 25 30"><path d="M9 27.5 Q12.5 30 16 27.5 V14 H22.5 L12.5 2 L2.5 14 H9 Z" fill="#a8d0ee" stroke="#2a4a66" stroke-width="2.2" stroke-linejoin="round"/></svg>
<svg class="a" style="left:1844px;top:51px;" width="20" height="55" viewBox="0 0 20 55"><defs><linearGradient id="g13" x1="0" y1="0" x2="0" y2="1"><stop offset="0" stop-color="#fafafa"/><stop offset="1" stop-color="#d9d9d9"/></linearGradient></defs><rect x="0" y="0" width="20" height="55" fill="url(#g13)"/><path d="M4 41 H15 V42.5 L9.5 47 L4 42.5 Z" fill="#000"/></svg>
<svg class="a" style="left:8px;top:127px;" width="3" height="44" viewBox="0 0 3 44"><rect x="0.5" y="0" width="2.5" height="2.5" fill="#a8a8a8"/><rect x="0.5" y="7" width="2.5" height="2.5" fill="#a8a8a8"/><rect x="0.5" y="14" width="2.5" height="2.5" fill="#a8a8a8"/><rect x="0.5" y="21" width="2.5" height="2.5" fill="#a8a8a8"/><rect x="0.5" y="28" width="2.5" height="2.5" fill="#a8a8a8"/><rect x="0.5" y="35" width="2.5" height="2.5" fill="#a8a8a8"/><rect x="0.5" y="42" width="2.5" height="2.5" fill="#a8a8a8"/></svg>
<svg class="a" style="left:30px;top:128px;" width="32" height="31" viewBox="0 0 32 31"><rect x="8" y="1" width="22" height="22" fill="#e4ecf4" stroke="#8c9aa8" stroke-width="1.8"/><path d="M22 22 L30 14 V22 Z" fill="#ffffff" stroke="#8c9aa8" stroke-width="1.2"/><rect x="1" y="9" width="16" height="21" fill="#c8d6e2" stroke="#7c8a98" stroke-width="2"/><path d="M9 12 V27 M5 16 H13" stroke="#2a3a4a" stroke-width="2"/></svg>
<div class="a" style="left:95px;top:130px;width:290px;height:40px;background:#fff;border:1.5px solid #cfcfcf;border-top-color:#b9b9b9;border-radius:2px 7px 7px 2px"></div>
<div class="a" style="left:97px;top:133px;width:286px;height:1px;background:#ececec"></div>
<div class="a" style="left:351px;top:132px;width:32.5px;height:36px;background:linear-gradient(#fbfbfb,#f3f3f3 60%,#efefef);border-radius:0 6px 6px 0"></div>
<div class="a" style="left:349px;top:133px;width:2px;height:35px;background:#d9d9d9"></div>
<svg class="a" style="left:360.0px;top:145.5px;" width="14" height="10" viewBox="0 0 14 10"><path d="M0.5 0.5 H13.5 L7 9.5 Z" fill="#8a8a8a"/></svg>
<div class="t" style="left:103.00px;top:133.45px;font-size:29px;font-family:'Liberation Sans',sans-serif;font-weight:normal;color:#000;-webkit-text-stroke:0.45px #000;">Standard</div>
<div class="a" style="left:419px;top:130px;width:328px;height:40px;background:#fff;border:1.5px solid #cfcfcf;border-top-color:#b9b9b9;border-radius:2px 7px 7px 2px"></div>
<div class="a" style="left:421px;top:133px;width:324px;height:1px;background:#ececec"></div>
<div class="a" style="left:713px;top:132px;width:32.5px;height:36px;background:linear-gradient(#fbfbfb,#f3f3f3 60%,#efefef);border-radius:0 6px 6px 0"></div>
<div class="a" style="left:711px;top:133px;width:2px;height:35px;background:#d9d9d9"></div>
<svg class="a" style="left:722.0px;top:145.5px;" width="14" height="10" viewBox="0 0 14 10"><path d="M0.5 0.5 H13.5 L7 9.5 Z" fill="#8a8a8a"/></svg>
<div class="t" style="left:427.00px;top:133.45px;font-size:29px;font-family:'Liberation Sans',sans-serif;font-weight:normal;color:#000;letter-spacing:0.250px;-webkit-text-stroke:0.45px #000;">Times New Roman</div>
<div class="a" style="left:781px;top:130px;width:120px;height:40px;background:#fff;border:1.5px solid #cfcfcf;border-top-color:#b9b9b9;border-radius:2px 7px 7px 2px"></div>
<div class="a" style="left:783px;top:133px;width:116px;height:1px;background:#ececec"></div>
<div class="a" style="left:867px;top:132px;width:32.5px;height:36px;background:linear-gradient(#fbfbfb,#f3f3f3 60%,#efefef);border-radius:0 6px 6px 0"></div>
<div class="a" style="left:865px;top:133px;width:2px;height:35px;background:#d9d9d9"></div>
<svg class="a" style="left:876.0px;top:145.5px;" width="14" height="10" viewBox="0 0 14 10"><path d="M0.5 0.5 H13.5 L7 9.5 Z" fill="#8a8a8a"/></svg>
<div class="t" style="left:792.00px;top:133.45px;font-size:29px;font-family:'Liberation Sans',sans-serif;font-weight:normal;color:#000;-webkit-text-stroke:0.45px #000;">12</div>
<svg class="a" style="left:937px;top:130px;" width="20" height="28" viewBox="0 0 20 28"><path d="M1 1 H19 V6 H8 V11 H17 V16 H8 V27 H1 Z" fill="#1e3a50" stroke="#0e2230" stroke-width="0.8"/></svg>
<svg class="a" style="left:978px;top:130px;" width="32" height="28" viewBox="0 0 32 28"><path d="M7 1 H15 L13 11 L24 1 H32 L18 12 L25 27 H16 L11 16 L9 27 H1 Z" fill="#2a4a60" stroke="#15303f" stroke-width="0.6"/></svg>
<svg class="a" style="left:1029px;top:129px;" width="24" height="29" viewBox="0 0 24 29"><path d="M3 1 H7.5 V17 Q7.5 21.5 12 21.5 Q16.5 21.5 16.5 17 V1 H21 V17 Q21 25 12 25 Q3 25 3 17 Z" fill="#3a5a72"/><rect x="0" y="26.5" width="24" height="2.5" fill="#3a5a72"/></svg>
<svg class="a" style="left:1089px;top:136px;" width="25" height="19" viewBox="0 0 25 19"><rect x="0.0" y="0.0" width="25.0" height="2.6" fill="#1e2e3c"/><rect x="0.0" y="4.1" width="13.8" height="2.6" fill="#1e2e3c"/><rect x="0.0" y="8.2" width="25.0" height="2.6" fill="#1e2e3c"/><rect x="0.0" y="12.3" width="13.8" height="2.6" fill="#1e2e3c"/><rect x="0.0" y="16.4" width="25.0" height="2.6" fill="#1e2e3c"/></svg>
<svg class="a" style="left:1136px;top:136px;" width="25" height="19" viewBox="0 0 25 19"><rect x="0.0" y="0.0" width="25.0" height="2.6" fill="#1e2e3c"/><rect x="5.6" y="4.1" width="13.8" height="2.6" fill="#1e2e3c"/><rect x="0.0" y="8.2" width="25.0" height="2.6" fill="#1e2e3c"/><rect x="5.6" y="12.3" width="13.8" height="2.6" fill="#1e2e3c"/><rect x="0.0" y="16.4" width="25.0" height="2.6" fill="#1e2e3c"/></svg>
<svg class="a" style="left:1182px;top:136px;" width="25" height="19" viewBox="0 0 25 19"><rect x="0.0" y="0.0" width="25.0" height="2.6" fill="#1e2e3c"/><rect x="11.2" y="4.1" width="13.8" height="2.6" fill="#1e2e3c"/><rect x="0.0" y="8.2" width="25.0" height="2.6" fill="#1e2e3c"/><rect x="11.2" y="12.3" width="13.8" height="2.6" fill="#1e2e3c"/><rect x="0.0" y="16.4" width="25.0" height="2.6" fill="#1e2e3c"/></svg>
<svg class="a" style="left:1219px;top:122px;" width="45" height="45" viewBox="0 0 45 45"><rect x="1.2" y="1.2" width="42.6" height="42.6" rx="5" fill="#dfe2ea" stroke="#8c8c8c" stroke-width="2.4"/><rect x="3" y="3" width="39" height="39" rx="3" fill="none" stroke="#eef0f4" stroke-width="1.5"/></svg>
<svg class="a" style="left:1228px;top:136px;" width="25" height="19" viewBox="0 0 25 19"><rect x="0.0" y="0.0" width="25.0" height="2.6" fill="#1e2e3c"/><rect x="0.0" y="4.1" width="25.0" height="2.6" fill="#1e2e3c"/><rect x="0.0" y="8.2" width="25.0" height="2.6" fill="#1e2e3c"/><rect x="0.0" y="12.3" width="25.0" height="2.6" fill="#1e2e3c"/><rect x="0.0" y="16.4" width="25.0" height="2.6" fill="#1e2e3c"/></svg>
<svg class="a" style="left:1288px;top:131px;" width="30" height="27" viewBox="0 0 30 27"><path d="M3 1 H10 M6.5 1 V9 M3 9 H10" stroke="#4a7aa4" stroke-width="2.2" fill="none"/><path d="M2 17 H11 M2 26 H11 M5 17 V26 M8 17 V26" stroke="#4a7aa4" stroke-width="2" fill="none"/><rect x="14" y="2" width="16" height="2.6" fill="#1e2e3c"/><rect x="14" y="7" width="10" height="2.6" fill="#1e2e3c"/><rect x="14" y="17" width="16" height="2.6" fill="#1e2e3c"/><rect x="14" y="22" width="10" height="2.6" fill="#1e2e3c"/></svg>
<svg class="a" style="left:1334px;top:131px;" width="29" height="27" viewBox="0 0 29 27"><circle cx="5" cy="6" r="4" fill="#6aa0cc" stroke="#1e3c56" stroke-width="1.8"/><circle cx="5" cy="21" r="4" fill="#6aa0cc" stroke="#1e3c56" stroke-width="1.8"/><rect x="12" y="4" width="17" height="2.6" fill="#1e2e3c"/><rect x="12" y="9" width="11" height="2.6" fill="#1e2e3c"/><rect x="12" y="19" width="17" height="2.6" fill="#1e2e3c"/><rect x="12" y="24" width="11" height="2.6" fill="#1e2e3c"/></svg>
<svg class="a" style="left:1377px;top:130px;" width="33" height="30" viewBox="0 0 33 30"><path d="M1.5 14.5 L9 8 V12 H14 V17 H9 V21 Z" fill="#f0781c" stroke="#a04008" stroke-width="1.4" stroke-linejoin="round"/><rect x="12" y="5" width="21" height="2" fill="#7a3030"/><rect x="17" y="10" width="16" height="3.4" fill="#2aa0e0"/><rect x="17" y="16" width="12" height="3.4" fill="#2a8ac8"/><rect x="12" y="23" width="21" height="2" fill="#7a3030"/><rect x="17" y="1" width="1.6" height="4" fill="#333"/><rect x="17" y="25" width="1.6" height="5" fill="#333"/></svg>
<svg class="a" style="left:1424px;top:130px;" width="33" height="30" viewBox="0 0 33 30"><path d="M15 14.5 L7.5 8 V12 H1.5 V17 H7.5 V21 Z" fill="#f0781c" stroke="#a04008" stroke-width="1.4" stroke-linejoin="round"/><rect x="12" y="5" width="21" height="2" fill="#7a3030"/><rect x="17" y="10" width="16" height="3.4" fill="#2aa0e0"/><rect x="17" y="16" width="12" height="3.4" fill="#2a8ac8"/><rect x="12" y="23" width="21" height="2" fill="#7a3030"/><rect x="17" y="1" width="1.6" height="4" fill="#333"/><rect x="17" y="25" width="1.6" height="5" fill="#333"/></svg>
<svg class="a" style="left:1486px;top:128px;" width="33" height="32" viewBox="0 0 33 32"><path d="M4.5 23 L12.5 1.5 H20.5 L28.5 23 H22.5 L21 18.5 H12 L10.5 23 Z" fill="#5a8ab0" stroke="#1a3a54" stroke-width="2.2" stroke-linejoin="round"/><path d="M13.5 13.5 L16.5 6 L19.5 13.5 Z" fill="#1a3a54"/><rect x="0" y="24.5" width="33" height="7.5" fill="#b80e0e"/></svg>
<svg class="a" style="left:1530px;top:140px;" width="10" height="6" viewBox="0 0 10 6"><path d="M0 0 H10 V1.5 L5 6 L0 1.5 Z" fill="#000"/></svg>
<svg class="a" style="left:1554px;top:128px;" width="33" height="32" viewBox="0 0 33 32"><rect x="0" y="0" width="24" height="20" fill="#f4e21a"/><text x="0.5" y="15" font-family="Liberation Sans" font-size="16" fill="#3a3410">ab</text><path d="M14 21 L28 5 Q30 3 32 5 Q33.5 7 31.5 9 L18 24 L13 25 Z" fill="#d8dee4" stroke="#6a7078" stroke-width="1.4"/><path d="M14 21 L18 24 L13 25 Z" fill="#c89a30"/><rect x="0" y="25" width="33" height="7" fill="#ffee00"/></svg>
<svg class="a" style="left:1598px;top:140px;" width="10" height="6" viewBox="0 0 10 6"><path d="M0 0 H10 V1.5 L5 6 L0 1.5 Z" fill="#000"/></svg>
<svg class="a" style="left:1622px;top:128px;" width="33" height="32" viewBox="0 0 33 32"><path d="M4 10 L14 2 L26 14 L16 22 Z" fill="#e4e8ec" stroke="#5a6068" stroke-width="2"/><ellipse cx="10" cy="6" rx="5" ry="3.5" fill="#c8ccd0" stroke="#5a6068" stroke-width="1.5"/><path d="M20 8 Q28 6 28 16 V22" fill="none" stroke="#3a90d0" stroke-width="3"/><rect x="1.2" y="24.2" width="30.6" height="7" fill="#fff" stroke="#000" stroke-width="2.4"/></svg>
<svg class="a" style="left:1666px;top:140px;" width="10" height="6" viewBox="0 0 10 6"><path d="M0 0 H10 V1.5 L5 6 L0 1.5 Z" fill="#000"/></svg>
<svg class="a" style="left:1696px;top:117px;" width="20" height="57" viewBox="0 0 20 57"><defs><linearGradient id="g14" x1="0" y1="0" x2="0" y2="1"><stop offset="0" stop-color="#fafafa"/><stop offset="1" stop-color="#d9d9d9"/></linearGradient></defs><rect x="0" y="0" width="20" height="57" fill="url(#g14)"/><path d="M4 43 H15 V44.5 L9.5 49 L4 44.5 Z" fill="#000"/></svg>
<div class="a" style="left:2249px;top:182px;width:623px;height:1525px;background:#efefef"></div>
<div class="a" style="left:2249px;top:182px;width:4px;height:1525px;background:#e6e6e6"></div>
<div class="a" style="left:2253px;top:182px;width:10px;height:1525px;background:linear-gradient(90deg,#fafafa,#ffffff)"></div>
<div class="a" style="left:2263px;top:182px;width:2px;height:1525px;background:#d6d6d6"></div>
<div class="a" style="left:2271px;top:188px;width:1px;height:1513px;background:#e2e2e2"></div>
<div class="a" style="left:2790px;top:188px;width:2px;height:1513px;background:#dedede"></div>
<div class="a" style="left:2866px;top:182px;width:3px;height:1525px;background:#d6d6d6"></div>
<div class="a" style="left:2271px;top:188px;width:520px;height:2px;background:#e6e6e6"></div>
<div class="a" style="left:2271px;top:1700px;width:521px;height:2px;background:#e0e0e0"></div>
<div class="a" style="left:2253px;top:1705px;width:619px;height:2px;background:#e2e2e2"></div>
<svg class="a" style="left:2253px;top:910px;" width="4" height="68" viewBox="0 0 4 68"><rect x="0" y="0" width="3" height="2" fill="#b8b8b8"/><rect x="0" y="9" width="3" height="2" fill="#b8b8b8"/><rect x="0" y="18" width="3" height="2" fill="#b8b8b8"/><rect x="0" y="27" width="3" height="2" fill="#b8b8b8"/><rect x="0" y="36" width="3" height="2" fill="#b8b8b8"/><rect x="0" y="45" width="3" height="2" fill="#b8b8b8"/><rect x="0" y="54" width="3" height="2" fill="#b8b8b8"/><rect x="0" y="63" width="3" height="2" fill="#b8b8b8"/></svg>
<div class="t" style="left:2292.00px;top:203.10px;font-size:30px;font-family:'Liberation Sans',sans-serif;font-weight:bold;color:#000;letter-spacing:-0.300px;-webkit-text-stroke:0.2px #000;">Eigenschaften</div>
<svg class="a" style="left:2766px;top:209px;" width="17" height="17" viewBox="0 0 17 17"><path d="M2 2 L15 15 M15 2 L2 15" stroke="#555" stroke-width="3.6" stroke-linecap="round"/></svg>
<div class="a" style="left:2272px;top:242px;width:519px;height:48px;background:linear-gradient(#e4e4e4,#e9e9e9 50%,#ececec);border-top:2px solid #f2f2f2"></div>
<svg class="a" style="left:2282px;top:260px;" width="19" height="18" viewBox="0 0 19 18"><rect x="1" y="1" width="17" height="16" fill="#eaf0f6" stroke="#3c3c3c" stroke-width="2"/><rect x="4.5" y="8" width="10" height="2.2" fill="#2c2c2c"/></svg>
<div class="t" style="left:2310.00px;top:256.60px;font-size:30px;font-family:'Liberation Sans',sans-serif;font-weight:bold;color:#2a2a2a;-webkit-text-stroke:0.2px #2a2a2a;">Text</div>
<svg class="a" style="left:2759px;top:262px;" width="23" height="20" viewBox="0 0 23 20"><rect x="1.2" y="1.2" width="20.6" height="17.6" fill="#f4faff" stroke="#4c5a6c" stroke-width="2.2"/><rect x="2.3" y="2.3" width="18.4" height="3.4" fill="#8ab2d8"/><circle cx="7" cy="12.5" r="1.3" fill="#333"/><circle cx="11.5" cy="12.5" r="1.3" fill="#333"/><circle cx="16" cy="12.5" r="1.3" fill="#333"/></svg>
<div class="a" style="left:2295px;top:312px;width:342px;height:39px;background:#fff;border:1.5px solid #cfcfcf;border-top-color:#b9b9b9;border-radius:2px 7px 7px 2px"></div>
<div class="a" style="left:2297px;top:315px;width:338px;height:1px;background:#ececec"></div>
<div class="a" style="left:2602px;top:314px;width:33.5px;height:35px;background:linear-gradient(#fbfbfb,#f3f3f3 60%,#efefef);border-radius:0 6px 6px 0"></div>
<div class="a" style="left:2600px;top:315px;width:2px;height:34px;background:#d9d9d9"></div>
<svg class="a" style="left:2611.5px;top:327.0px;" width="14" height="10" viewBox="0 0 14 10"><path d="M0.5 0.5 H13.5 L7 9.5 Z" fill="#8a8a8a"/></svg>
<div class="t" style="left:2303.00px;top:314.95px;font-size:29px;font-family:'Liberation Sans',sans-serif;font-weight:normal;color:#000;letter-spacing:0.250px;-webkit-text-stroke:0.45px #000;">Times New Roman</div>
<div class="a" style="left:2668px;top:312px;width:100px;height:39px;background:#fff;border:1.5px solid #cfcfcf;border-top-color:#b9b9b9;border-radius:2px 7px 7px 2px"></div>
<div class="a" style="left:2670px;top:315px;width:96px;height:1px;background:#ececec"></div>
<div class="a" style="left:2733px;top:314px;width:33.5px;height:35px;background:linear-gradient(#fbfbfb,#f3f3f3 60%,#efefef);border-radius:0 6px 6px 0"></div>
<div class="a" style="left:2731px;top:315px;width:2px;height:34px;background:#d9d9d9"></div>
<svg class="a" style="left:2742.5px;top:327.0px;" width="14" height="10" viewBox="0 0 14 10"><path d="M0.5 0.5 H13.5 L7 9.5 Z" fill="#8a8a8a"/></svg>
<div class="t" style="left:2679.00px;top:314.95px;font-size:29px;font-family:'Liberation Sans',sans-serif;font-weight:normal;color:#000;-webkit-text-stroke:0.45px #000;">12</div>
<div class="a" style="left:2287px;top:373px;width:259px;height:66px;background:linear-gradient(#efefef,#f6f6f6 40%,#fcfcfc);border-top:2px solid #e3e3e3;border-bottom:1px solid #e8e8e8"></div>
<svg class="a" style="left:2302px;top:390px;" width="20" height="28" viewBox="0 0 20 28"><path d="M1 1 H19 V6 H8 V11 H17 V16 H8 V27 H1 Z" fill="#1e3a50" stroke="#0e2230" stroke-width="0.8"/></svg>
<svg class="a" style="left:2342px;top:390px;" width="32" height="28" viewBox="0 0 32 28"><path d="M7 1 H15 L13 11 L24 1 H32 L18 12 L25 27 H16 L11 16 L9 27 H1 Z" fill="#2a4a60" stroke="#15303f" stroke-width="0.6"/></svg>
<svg class="a" style="left:2393px;top:388px;" width="24" height="29" viewBox="0 0 24 29"><path d="M3 1 H7.5 V17 Q7.5 21.5 12 21.5 Q16.5 21.5 16.5 17 V1 H21 V17 Q21 25 12 25 Q3 25 3 17 Z" fill="#3a5a72"/><rect x="0" y="26.5" width="24" height="2.5" fill="#3a5a72"/></svg>
<svg class="a" style="left:2431px;top:399px;" width="10" height="6" viewBox="0 0 10 6"><path d="M0 0 H10 V1.5 L5 6 L0 1.5 Z" fill="#000"/></svg>
<svg class="a" style="left:2455px;top:398px;" width="33" height="14" viewBox="0 0 33 14"><text x="0" y="12" font-family="Liberation Sans" font-weight="bold" font-size="12" fill="#4a4a4a" letter-spacing="-0.5">ABC</text><rect x="0" y="6" width="32" height="2" fill="#2a2a2a"/></svg>
<svg class="a" style="left:2503px;top:389px;" width="32" height="31" viewBox="0 0 32 31"><text x="6" y="30" font-family="Liberation Sans" font-weight="bold" font-size="28" fill="#a0a0a0">A</text><text x="0" y="26" font-family="Liberation Sans" font-weight="bold" font-size="28" fill="#5a8ab0" stroke="#1e3c54" stroke-width="1">A</text></svg>
<div class="a" style="left:2663px;top:373px;width:96px;height:66px;background:linear-gradient(#efefef,#f6f6f6 40%,#fcfcfc);border-top:2px solid #e3e3e3;border-bottom:1px solid #e8e8e8"></div>
<svg class="a" style="left:2670px;top:388px;" width="32" height="31" viewBox="0 0 32 31"><rect x="1" y="1" width="8" height="28" fill="#e8f0f6" stroke="#6a6a6a" stroke-width="2"/><path d="M2 6 H5 M2 11 H5 M2 16 H5 M2 21 H5" stroke="#888" stroke-width="1"/><path d="M9 30 L16 12 H22 L29 30 H24 L22.5 25 H15.5 L14 30 Z" fill="#6a9ac0" stroke="#1a3a54" stroke-width="1.8" stroke-linejoin="round"/><path d="M17 9.5 L23.5 2 L30 9.5 Z" fill="#f08a3a" stroke="#a84a10" stroke-width="1.4" stroke-linejoin="round"/></svg>
<svg class="a" style="left:2715px;top:388px;" width="32" height="31" viewBox="0 0 32 31"><rect x="1" y="1" width="8" height="28" fill="#e8f0f6" stroke="#6a6a6a" stroke-width="2"/><path d="M2 6 H5 M2 11 H5 M2 16 H5 M2 21 H5" stroke="#888" stroke-width="1"/><path d="M9 30 L16 12 H22 L29 30 H24 L22.5 25 H15.5 L14 30 Z" fill="#6a9ac0" stroke="#1a3a54" stroke-width="1.8" stroke-linejoin="round"/><path d="M17 2 H30 L23.5 9.5 Z" fill="#f08a3a" stroke="#a84a10" stroke-width="1.4" stroke-linejoin="round"/></svg>
<div class="a" style="left:2287px;top:466px;width:97px;height:66px;background:linear-gradient(#efefef,#f6f6f6 40%,#fcfcfc);border-top:2px solid #e3e3e3;border-bottom:1px solid #e8e8e8"></div>
<svg class="a" style="left:2295px;top:481px;" width="34" height="33" viewBox="0 0 34 33"><text x="0" y="30" font-family="Liberation Sans" font-weight="bold" font-size="26" fill="#8a8a8a">A</text><text x="15" y="16" font-family="Liberation Sans" font-weight="bold" font-size="17" fill="#5a8ab0" stroke="#1a3a54" stroke-width="0.8">A</text><path d="M17 30 L23.5 23 L30 30 Z" fill="#f07040" stroke="#b04010" stroke-width="1.2"/></svg>
<svg class="a" style="left:2341px;top:481px;" width="34" height="33" viewBox="0 0 34 33"><text x="0" y="26" font-family="Liberation Sans" font-weight="bold" font-size="26" fill="#8a8a8a">A</text><text x="15" y="32" font-family="Liberation Sans" font-weight="bold" font-size="17" fill="#5a8ab0" stroke="#1a3a54" stroke-width="0.8">A</text><path d="M17 2 H30 L23.5 9 Z" fill="#f07040" stroke="#b04010" stroke-width="1.2"/></svg>
<div class="a" style="left:2424px;top:466px;width:74px;height:66px;background:linear-gradient(#efefef,#f6f6f6 40%,#fcfcfc);border-top:2px solid #e3e3e3;border-bottom:1px solid #e8e8e8"></div>
<svg class="a" style="left:2433px;top:481px;" width="33" height="31" viewBox="0 0 33 31"><text x="0" y="16" font-family="Liberation Sans" font-weight="bold" font-size="17" fill="#5a6a78" letter-spacing="-1">AV</text><path d="M14 1 L22 17" stroke="#e83030" stroke-width="1.8"/><path d="M2 25 L8 19 V23 H24 V19 L30 25 L24 31 V27 H8 V31 Z" fill="#7ac0f0" stroke="#1a5a9a" stroke-width="1.5" stroke-linejoin="round"/></svg>
<svg class="a" style="left:2477px;top:494px;" width="10" height="6" viewBox="0 0 10 6"><path d="M0 0 H10 V1.5 L5 6 L0 1.5 Z" fill="#000"/></svg>
<div class="a" style="left:2555px;top:466px;width:74px;height:66px;background:linear-gradient(#efefef,#f6f6f6 40%,#fcfcfc);border-top:2px solid #e3e3e3;border-bottom:1px solid #e8e8e8"></div>
<svg class="a" style="left:2563px;top:481px;" width="33" height="32" viewBox="0 0 33 32"><path d="M4.5 23 L12.5 1.5 H20.5 L28.5 23 H22.5 L21 18.5 H12 L10.5 23 Z" fill="#5a8ab0" stroke="#1a3a54" stroke-width="2.2" stroke-linejoin="round"/><path d="M13.5 13.5 L16.5 6 L19.5 13.5 Z" fill="#1a3a54"/><rect x="0" y="24.5" width="33" height="7.5" fill="#b80e0e"/></svg>
<svg class="a" style="left:2608px;top:494px;" width="10" height="6" viewBox="0 0 10 6"><path d="M0 0 H10 V1.5 L5 6 L0 1.5 Z" fill="#000"/></svg>
<div class="a" style="left:2655px;top:466px;width:74px;height:66px;background:linear-gradient(#efefef,#f6f6f6 40%,#fcfcfc);border-top:2px solid #e3e3e3;border-bottom:1px solid #e8e8e8"></div>
<svg class="a" style="left:2663px;top:481px;" width="33" height="32" viewBox="0 0 33 32"><rect x="0" y="0" width="24" height="20" fill="#f4e21a"/><text x="0.5" y="15" font-family="Liberation Sans" font-size="16" fill="#3a3410">ab</text><path d="M14 21 L28 5 Q30 3 32 5 Q33.5 7 31.5 9 L18 24 L13 25 Z" fill="#d8dee4" stroke="#6a7078" stroke-width="1.4"/><path d="M14 21 L18 24 L13 25 Z" fill="#c89a30"/><rect x="0" y="25" width="33" height="7" fill="#ffee00"/></svg>
<svg class="a" style="left:2708px;top:494px;" width="10" height="6" viewBox="0 0 10 6"><path d="M0 0 H10 V1.5 L5 6 L0 1.5 Z" fill="#000"/></svg>
<div class="a" style="left:2272px;top:540px;width:519px;height:51px;background:linear-gradient(#e4e4e4,#e9e9e9 50%,#ececec);border-top:2px solid #f2f2f2"></div>
<svg class="a" style="left:2282px;top:558px;" width="19" height="18" viewBox="0 0 19 18"><rect x="1" y="1" width="17" height="16" fill="#eaf0f6" stroke="#3c3c3c" stroke-width="2"/><rect x="4.5" y="8" width="10" height="2.2" fill="#2c2c2c"/></svg>
<div class="t" style="left:2310.00px;top:554.60px;font-size:30px;font-family:'Liberation Sans',sans-serif;font-weight:bold;color:#2a2a2a;-webkit-text-stroke:0.2px #2a2a2a;">Absatz</div>
<svg class="a" style="left:2759px;top:560px;" width="23" height="20" viewBox="0 0 23 20"><rect x="1.2" y="1.2" width="20.6" height="17.6" fill="#f4faff" stroke="#4c5a6c" stroke-width="2.2"/><rect x="2.3" y="2.3" width="18.4" height="3.4" fill="#8ab2d8"/><circle cx="7" cy="12.5" r="1.3" fill="#333"/><circle cx="11.5" cy="12.5" r="1.3" fill="#333"/><circle cx="16" cy="12.5" r="1.3" fill="#333"/></svg>
<div class="a" style="left:2287px;top:597px;width:190px;height:65px;background:linear-gradient(#efefef,#f6f6f6 40%,#fcfcfc);border-top:2px solid #e3e3e3;border-bottom:1px solid #e8e8e8"></div>
<svg class="a" style="left:2299px;top:620px;" width="26" height="19" viewBox="0 0 26 19"><rect x="0.0" y="0.0" width="26.0" height="2.6" fill="#1e2e3c"/><rect x="0.0" y="4.1" width="14.3" height="2.6" fill="#1e2e3c"/><rect x="0.0" y="8.2" width="26.0" height="2.6" fill="#1e2e3c"/><rect x="0.0" y="12.3" width="14.3" height="2.6" fill="#1e2e3c"/><rect x="0.0" y="16.4" width="26.0" height="2.6" fill="#1e2e3c"/></svg>
<svg class="a" style="left:2345px;top:620px;" width="26" height="19" viewBox="0 0 26 19"><rect x="0.0" y="0.0" width="26.0" height="2.6" fill="#1e2e3c"/><rect x="5.8" y="4.1" width="14.3" height="2.6" fill="#1e2e3c"/><rect x="0.0" y="8.2" width="26.0" height="2.6" fill="#1e2e3c"/><rect x="5.8" y="12.3" width="14.3" height="2.6" fill="#1e2e3c"/><rect x="0.0" y="16.4" width="26.0" height="2.6" fill="#1e2e3c"/></svg>
<svg class="a" style="left:2391px;top:620px;" width="26" height="19" viewBox="0 0 26 19"><rect x="0.0" y="0.0" width="26.0" height="2.6" fill="#1e2e3c"/><rect x="11.7" y="4.1" width="14.3" height="2.6" fill="#1e2e3c"/><rect x="0.0" y="8.2" width="26.0" height="2.6" fill="#1e2e3c"/><rect x="11.7" y="12.3" width="14.3" height="2.6" fill="#1e2e3c"/><rect x="0.0" y="16.4" width="26.0" height="2.6" fill="#1e2e3c"/></svg>
<svg class="a" style="left:2428px;top:606px;" width="46" height="46" viewBox="0 0 46 46"><rect x="1.2" y="1.2" width="43.6" height="43.6" rx="5" fill="#dfe2ea" stroke="#8c8c8c" stroke-width="2.4"/><rect x="3" y="3" width="40" height="40" rx="3" fill="none" stroke="#eef0f4" stroke-width="1.5"/></svg>
<svg class="a" style="left:2438px;top:620px;" width="26" height="19" viewBox="0 0 26 19"><rect x="0.0" y="0.0" width="26.0" height="2.6" fill="#1e2e3c"/><rect x="0.0" y="4.1" width="26.0" height="2.6" fill="#1e2e3c"/><rect x="0.0" y="8.2" width="26.0" height="2.6" fill="#1e2e3c"/><rect x="0.0" y="12.3" width="26.0" height="2.6" fill="#1e2e3c"/><rect x="0.0" y="16.4" width="26.0" height="2.6" fill="#1e2e3c"/></svg>
<div class="a" style="left:2287px;top:680px;width:141px;height:64px;background:linear-gradient(#efefef,#f6f6f6 40%,#fcfcfc);border-top:2px solid #e3e3e3;border-bottom:1px solid #e8e8e8"></div>
<svg class="a" style="left:2298px;top:696px;" width="29" height="27" viewBox="0 0 29 27"><circle cx="5" cy="6" r="4" fill="#6aa0cc" stroke="#1e3c56" stroke-width="1.8"/><circle cx="5" cy="21" r="4" fill="#6aa0cc" stroke="#1e3c56" stroke-width="1.8"/><rect x="12" y="4" width="17" height="2.6" fill="#1e2e3c"/><rect x="12" y="9" width="11" height="2.6" fill="#1e2e3c"/><rect x="12" y="19" width="17" height="2.6" fill="#1e2e3c"/><rect x="12" y="24" width="11" height="2.6" fill="#1e2e3c"/></svg>
<svg class="a" style="left:2339px;top:706px;" width="10" height="6" viewBox="0 0 10 6"><path d="M0 0 H10 V1.5 L5 6 L0 1.5 Z" fill="#000"/></svg>
<svg class="a" style="left:2366px;top:696px;" width="30" height="27" viewBox="0 0 30 27"><path d="M3 1 H10 M6.5 1 V9 M3 9 H10" stroke="#4a7aa4" stroke-width="2.2" fill="none"/><path d="M2 17 H11 M2 26 H11 M5 17 V26 M8 17 V26" stroke="#4a7aa4" stroke-width="2" fill="none"/><rect x="14" y="2" width="16" height="2.6" fill="#1e2e3c"/><rect x="14" y="7" width="10" height="2.6" fill="#1e2e3c"/><rect x="14" y="17" width="16" height="2.6" fill="#1e2e3c"/><rect x="14" y="22" width="10" height="2.6" fill="#1e2e3c"/></svg>
<svg class="a" style="left:2408px;top:706px;" width="10" height="6" viewBox="0 0 10 6"><path d="M0 0 H10 V1.5 L5 6 L0 1.5 Z" fill="#000"/></svg>
<div class="a" style="left:2500px;top:680px;width:101px;height:64px;background:linear-gradient(#efefef,#f6f6f6 40%,#fcfcfc);border-top:2px solid #e3e3e3;border-bottom:1px solid #e8e8e8"></div>
<svg class="a" style="left:2506px;top:693px;" width="63" height="32" viewBox="0 0 63 32"><path d="M3 16 L11 6 L21 16 L13 26 Z" fill="#c8d4f0" stroke="#6a7ab0" stroke-width="1.6"/><ellipse cx="9" cy="5" rx="4" ry="3" fill="#c0cce8" stroke="#6a7ab0" stroke-width="1.2"/><path d="M20 9 Q27 11 25 22" fill="none" stroke="#2a2a2a" stroke-width="2"/><rect x="31.5" y="1.5" width="29" height="29" fill="none" stroke="#4a5a70" stroke-width="2.4"/><rect x="35" y="5" width="22" height="22" fill="none" stroke="#1a1a1a" stroke-width="2"/></svg>
<svg class="a" style="left:2580px;top:706px;" width="10" height="6" viewBox="0 0 10 6"><path d="M0 0 H10 V1.5 L5 6 L0 1.5 Z" fill="#000"/></svg>
<div class="t" style="left:2286.00px;top:757.10px;font-size:30px;font-family:'Liberation Sans',sans-serif;font-weight:normal;color:#000;-webkit-text-stroke:0.45px #000;">Abstand</div>
<div class="t" style="left:2547.00px;top:757.10px;font-size:30px;font-family:'Liberation Sans',sans-serif;font-weight:normal;color:#000;-webkit-text-stroke:0.45px #000;">Einzug</div>
<div class="a" style="left:2287px;top:794px;width:97px;height:64px;background:linear-gradient(#efefef,#f6f6f6 40%,#fcfcfc);border-top:2px solid #e3e3e3;border-bottom:1px solid #e8e8e8"></div>
<svg class="a" style="left:2296px;top:809px;" width="33" height="30" viewBox="0 0 33 30"><path d="M1.5 8 L7 1 L12.5 8 Z" fill="#e8f2fa" stroke="#2a5c8e" stroke-width="1.8" stroke-linejoin="round"/><path d="M1.5 19 H12.5 L7 26 Z" fill="#e8f2fa" stroke="#2a5c8e" stroke-width="1.8" stroke-linejoin="round"/><rect x="16" y="1" width="16" height="2.4" fill="#3a4a5a"/><rect x="16" y="5.5" width="16" height="2.4" fill="#3a4a5a"/><rect x="16" y="10" width="16" height="2.4" fill="#3a4a5a"/><rect x="16" y="17" width="16" height="2.4" fill="#3a4a5a"/><rect x="16" y="21.5" width="16" height="2.4" fill="#3a4a5a"/><rect x="16" y="26" width="16" height="2.4" fill="#3a4a5a"/></svg>
<svg class="a" style="left:2341px;top:809px;" width="33" height="30" viewBox="0 0 33 30"><path d="M1.5 1 H12.5 L7 8 Z" fill="#e8f2fa" stroke="#2a5c8e" stroke-width="1.8" stroke-linejoin="round"/><path d="M1.5 26 L7 19 L12.5 26 Z" fill="#e8f2fa" stroke="#2a5c8e" stroke-width="1.8" stroke-linejoin="round"/><rect x="16" y="1" width="16" height="2.4" fill="#3a4a5a"/><rect x="16" y="5.5" width="16" height="2.4" fill="#3a4a5a"/><rect x="16" y="10" width="16" height="2.4" fill="#3a4a5a"/><rect x="16" y="17" width="16" height="2.4" fill="#3a4a5a"/><rect x="16" y="21.5" width="16" height="2.4" fill="#3a4a5a"/><rect x="16" y="26" width="16" height="2.4" fill="#3a4a5a"/></svg>
<div class="a" style="left:2547px;top:794px;width:154px;height:64px;background:linear-gradient(#efefef,#f6f6f6 40%,#fcfcfc);border-top:2px solid #e3e3e3;border-bottom:1px solid #e8e8e8"></div>
<svg class="a" style="left:2556px;top:809px;" width="33" height="31" viewBox="0 0 33 31"><path d="M15 15 L8 8.5 V12 H1.5 V18 H8 V21.5 Z" fill="#f0501c" stroke="#9a2a08" stroke-width="1.4" stroke-linejoin="round"/><rect x="13" y="5" width="20" height="2" fill="#3a3a3a"/><rect x="18" y="10" width="15" height="3.2" fill="#2aa0e0"/><rect x="18" y="16" width="12" height="3.2" fill="#2a8ac8"/><rect x="13" y="23" width="20" height="2" fill="#3a3a3a"/><rect x="19" y="0" width="1.6" height="5" fill="#333"/><rect x="19" y="25" width="1.6" height="6" fill="#333"/></svg>
<svg class="a" style="left:2602px;top:809px;" width="33" height="31" viewBox="0 0 33 31"><path d="M1.5 15 L8.5 8.5 V12 H15 V18 H8.5 V21.5 Z" fill="#f0501c" stroke="#9a2a08" stroke-width="1.4" stroke-linejoin="round"/><rect x="13" y="5" width="20" height="2" fill="#3a3a3a"/><rect x="18" y="10" width="15" height="3.2" fill="#2aa0e0"/><rect x="18" y="16" width="12" height="3.2" fill="#2a8ac8"/><rect x="13" y="23" width="20" height="2" fill="#3a3a3a"/><rect x="19" y="0" width="1.6" height="5" fill="#333"/><rect x="19" y="25" width="1.6" height="6" fill="#333"/></svg>
<svg class="a" style="left:2648px;top:809px;" width="41" height="31" viewBox="0 0 41 31"><path d="M15 12 L8 4.5 V8.5 H1.5 V15.5 H8 V19.5 Z" fill="#8ad84a" stroke="#3a8a18" stroke-width="1.4" stroke-linejoin="round"/><path d="M18 6 H23 M18 4 V8 M23 4 V8" stroke="#3a5a8a" stroke-width="1.6"/><rect x="26" y="5" width="13" height="2.2" fill="#5a7ab0"/><rect x="32" y="10" width="8" height="2.2" fill="#5a7ab0"/><rect x="32" y="15" width="8" height="2.2" fill="#5a7ab0"/><rect x="32" y="20" width="8" height="2.2" fill="#5a7ab0"/><rect x="32" y="25" width="8" height="2.2" fill="#5a7ab0"/><rect x="32" y="29" width="8" height="2.2" fill="#5a7ab0"/></svg>
<svg class="a" style="left:2287px;top:897px;" width="30" height="31" viewBox="0 0 30 31"><path d="M10 1.5 H16 M13 1.5 V13 M10 13 H16" stroke="#2a3a4a" stroke-width="2"/><rect x="0" y="16" width="30" height="3" fill="#5a78a0"/><rect x="0" y="21.5" width="30" height="3" fill="#5a78a0"/><rect x="0" y="27" width="30" height="3" fill="#5a78a0"/></svg>
<div class="a" style="left:2348px;top:893px;width:140px;height:46px;background:#fff;border:1.5px solid #d8d8d8;border-top-color:#c8c8c8"></div>
<div class="t" style="left:2353.00px;top:901.60px;font-size:30px;font-family:'Liberation Sans',sans-serif;font-weight:normal;color:#000;-webkit-text-stroke:0.45px #000;">0,00 cm</div>
<svg class="a" style="left:2503px;top:893px;" width="25" height="42" viewBox="0 0 25 42"><rect x="1.2" y="1.2" width="22.6" height="39.6" rx="10" fill="#fbfbfb" stroke="#444" stroke-width="2.2"/><path d="M7.5 16 L12.5 8.5 L17.5 16 Z" fill="#3a3a3a"/><path d="M7.5 25 H17.5 L12.5 32.5 Z" fill="#3a3a3a"/></svg>
<svg class="a" style="left:2546px;top:899px;" width="31" height="28" viewBox="0 0 31 28"><path d="M1 3 H10 M1 0 V6 M10 0 V6" stroke="#3a5a8a" stroke-width="1.8"/><rect x="18" y="1" width="13" height="3" fill="#5a78a0"/><rect x="18" y="8" width="13" height="3" fill="#5a78a0"/><rect x="18" y="15" width="13" height="3" fill="#5a78a0"/><rect x="18" y="22" width="13" height="3" fill="#5a78a0"/></svg>
<div class="a" style="left:2607px;top:893px;width:125px;height:46px;background:#fff;border:1.5px solid #d8d8d8;border-top-color:#c8c8c8"></div>
<div class="t" style="left:2613.00px;top:901.60px;font-size:30px;font-family:'Liberation Sans',sans-serif;font-weight:normal;color:#000;-webkit-text-stroke:0.45px #000;">0,00 cm</div>
<svg class="a" style="left:2746px;top:893px;" width="25" height="42" viewBox="0 0 25 42"><rect x="1.2" y="1.2" width="22.6" height="39.6" rx="10" fill="#fbfbfb" stroke="#444" stroke-width="2.2"/><path d="M7.5 16 L12.5 8.5 L17.5 16 Z" fill="#3a3a3a"/><path d="M7.5 25 H17.5 L12.5 32.5 Z" fill="#3a3a3a"/></svg>
<svg class="a" style="left:2287px;top:969px;" width="30" height="31" viewBox="0 0 30 31"><rect x="0" y="1" width="30" height="3" fill="#5a78a0"/><rect x="0" y="6.5" width="30" height="3" fill="#5a78a0"/><rect x="0" y="12" width="30" height="3" fill="#5a78a0"/><path d="M10 17 H16 M13 17 V29 M10 29 H16" stroke="#2a3a4a" stroke-width="2"/></svg>
<div class="a" style="left:2348px;top:965px;width:140px;height:46px;background:#fff;border:1.5px solid #d8d8d8;border-top-color:#c8c8c8"></div>
<div class="t" style="left:2353.00px;top:973.60px;font-size:30px;font-family:'Liberation Sans',sans-serif;font-weight:normal;color:#000;-webkit-text-stroke:0.45px #000;">0,00 cm</div>
<svg class="a" style="left:2503px;top:965px;" width="25" height="42" viewBox="0 0 25 42"><rect x="1.2" y="1.2" width="22.6" height="39.6" rx="10" fill="#fbfbfb" stroke="#444" stroke-width="2.2"/><path d="M7.5 16 L12.5 8.5 L17.5 16 Z" fill="#3a3a3a"/><path d="M7.5 25 H17.5 L12.5 32.5 Z" fill="#3a3a3a"/></svg>
<svg class="a" style="left:2546px;top:971px;" width="31" height="28" viewBox="0 0 31 28"><path d="M21 5 H30 M21 2 V8 M30 2 V8" stroke="#3a5a8a" stroke-width="1.8"/><rect x="0" y="1" width="13" height="3" fill="#5a78a0"/><rect x="0" y="8" width="13" height="3" fill="#5a78a0"/><rect x="0" y="15" width="13" height="3" fill="#5a78a0"/><rect x="0" y="22" width="13" height="3" fill="#5a78a0"/></svg>
<div class="a" style="left:2607px;top:965px;width:125px;height:46px;background:#fff;border:1.5px solid #d8d8d8;border-top-color:#c8c8c8"></div>
<div class="t" style="left:2613.00px;top:973.60px;font-size:30px;font-family:'Liberation Sans',sans-serif;font-weight:normal;color:#000;-webkit-text-stroke:0.45px #000;">0,00 cm</div>
<svg class="a" style="left:2746px;top:965px;" width="25" height="42" viewBox="0 0 25 42"><rect x="1.2" y="1.2" width="22.6" height="39.6" rx="10" fill="#fbfbfb" stroke="#444" stroke-width="2.2"/><path d="M7.5 16 L12.5 8.5 L17.5 16 Z" fill="#3a3a3a"/><path d="M7.5 25 H17.5 L12.5 32.5 Z" fill="#3a3a3a"/></svg>
<svg class="a" style="left:2546px;top:1043px;" width="31" height="28" viewBox="0 0 31 28"><path d="M1 3 H10 M1 0 V6 M10 0 V6" stroke="#3a5a8a" stroke-width="1.8"/><rect x="15" y="1" width="16" height="3" fill="#5a78a0"/><rect x="0" y="8" width="31" height="3" fill="#5a78a0"/><rect x="0" y="15" width="31" height="3" fill="#5a78a0"/><rect x="0" y="22" width="31" height="3" fill="#5a78a0"/></svg>
<div class="a" style="left:2607px;top:1037px;width:125px;height:46px;background:#fff;border:1.5px solid #d8d8d8;border-top-color:#c8c8c8"></div>
<div class="t" style="left:2613.00px;top:1045.60px;font-size:30px;font-family:'Liberation Sans',sans-serif;font-weight:normal;color:#000;-webkit-text-stroke:0.45px #000;">0,00 cm</div>
<svg class="a" style="left:2746px;top:1037px;" width="25" height="42" viewBox="0 0 25 42"><rect x="1.2" y="1.2" width="22.6" height="39.6" rx="10" fill="#fbfbfb" stroke="#444" stroke-width="2.2"/><path d="M7.5 16 L12.5 8.5 L17.5 16 Z" fill="#3a3a3a"/><path d="M7.5 25 H17.5 L12.5 32.5 Z" fill="#3a3a3a"/></svg>
<div class="a" style="left:2287px;top:1028px;width:76px;height:64px;background:linear-gradient(#efefef,#f6f6f6 40%,#fcfcfc);border-top:2px solid #e3e3e3;border-bottom:1px solid #e8e8e8"></div>
<svg class="a" style="left:2298px;top:1046px;" width="34" height="22" viewBox="0 0 34 22"><path d="M5 0 L10 6 H7 V16 H10 L5 22 L0 16 H3 V6 H0 Z" fill="#3a5a78"/><rect x="13" y="3" width="21" height="3.2" fill="#5a78a0"/><rect x="13" y="9.5" width="21" height="3.2" fill="#5a78a0"/><rect x="13" y="16" width="21" height="3.2" fill="#5a78a0"/></svg>
<svg class="a" style="left:2344px;top:1053px;" width="10" height="6" viewBox="0 0 10 6"><path d="M0 0 H10 V1.5 L5 6 L0 1.5 Z" fill="#000"/></svg>
<div class="a" style="left:2272px;top:1114px;width:519px;height:54px;background:linear-gradient(#e4e4e4,#e9e9e9 50%,#ececec);border-top:2px solid #f2f2f2"></div>
<svg class="a" style="left:2282px;top:1132px;" width="19" height="18" viewBox="0 0 19 18"><rect x="1" y="1" width="17" height="16" fill="#eaf0f6" stroke="#3c3c3c" stroke-width="2"/><rect x="4.5" y="8" width="10" height="2.2" fill="#2c2c2c"/><rect x="8.4" y="4" width="2.2" height="10" fill="#2c2c2c"/></svg>
<div class="t" style="left:2310.00px;top:1128.60px;font-size:30px;font-family:'Liberation Sans',sans-serif;font-weight:bold;color:#2a2a2a;-webkit-text-stroke:0.2px #2a2a2a;">Seite</div>
<svg class="a" style="left:2759px;top:1134px;" width="23" height="20" viewBox="0 0 23 20"><rect x="1.2" y="1.2" width="20.6" height="17.6" fill="#f4faff" stroke="#4c5a6c" stroke-width="2.2"/><rect x="2.3" y="2.3" width="18.4" height="3.4" fill="#8ab2d8"/><circle cx="7" cy="12.5" r="1.3" fill="#333"/><circle cx="11.5" cy="12.5" r="1.3" fill="#333"/><circle cx="16" cy="12.5" r="1.3" fill="#333"/></svg>
<div class="a" style="left:2272px;top:1168px;width:519px;height:2px;background:#e2e2e2"></div>
<svg class="a" style="left:2823px;top:212px;" width="20" height="19" viewBox="0 0 20 19"><rect x="0" y="0" width="13" height="2.2" fill="#3a3a4a"/><rect x="0" y="4" width="13" height="2.2" fill="#3a3a4a"/><rect x="0" y="8" width="13" height="2.2" fill="#3a3a4a"/><path d="M8 11 H19 L13.5 18 Z" fill="#2a2a3a"/></svg>
<div class="a" style="left:2808px;top:258px;width:48px;height:2px;background:#e0e0e0"></div>
<div class="a" style="left:2800px;top:266px;width:64px;height:63px;border:2.4px solid #c6c6c6;border-radius:7px;background:#f3f3f3"></div>
<svg class="a" style="left:2809px;top:275px;" width="43" height="43" viewBox="0 0 43 43"><path d="M3 9 L20 3 L39 9 L22 15 Z" fill="#22b8f0"/><path d="M22 15 L39 9 L39 33 L22 41 Z" fill="#84dc1e"/><path d="M3 9 L22 15 L22 41 L3 34 Z" fill="#0c9ae8"/><path d="M13 27.5 L22 30.5 L22 41 L13 38 Z" fill="#6cd020"/><path d="M3 21.5 L22 28 L39 21 M12.5 12 L12.5 38 M29 12 L29 37.5 M11 6 L30 12 M29 6 L13 12" stroke="#e8fff0" stroke-width="2" fill="none"/><path d="M22 15 V41" stroke="#d8ffd0" stroke-width="1.5"/></svg>
<svg class="a" style="left:2810px;top:344px;" width="46" height="44" viewBox="0 0 46 44"><ellipse cx="23" cy="40" rx="17" ry="3" fill="#c8c8c8" opacity="0.7"/><circle cx="7" cy="16" r="4.5" fill="#f080d8"/><circle cx="21" cy="6" r="4" fill="#e890f0"/><circle cx="37" cy="7" r="5" fill="#f8e060"/><circle cx="41" cy="22" r="4.5" fill="#f07070"/><circle cx="12" cy="9" r="5.5" fill="#e07818"/><path d="M14 13 Q28 5 36 18 L30 30 Z" fill="#1a3a6a"/><path d="M14 13 L16 38 L34 30 Z" fill="#2a8ae0"/><path d="M26 24 Q39 22 37 36 L22 38 Z" fill="#58b838"/></svg>
<svg class="a" style="left:2808px;top:410px;" width="48" height="52" viewBox="0 0 48 52"><ellipse cx="26" cy="47" rx="18" ry="3" fill="#c8c8c8" opacity="0.7"/><path d="M4 14 L36 2 L46 30 L14 42 Z" fill="#f4f8fc" stroke="#a8b0b8" stroke-width="1.5"/><path d="M1 18 L33 8 L42 34 L10 44 Z" fill="#ffffff" stroke="#8a98a6" stroke-width="1.5"/><path d="M5 20 L31 12 L38 32 L12 40 Z" fill="#8cc8f0"/><path d="M12 40 L24 28 L30 34 L38 32 Z" fill="#78c040"/><path d="M6 12 L22 6 L20 14 Z" fill="#98d048"/><path d="M16 24 H26 V36 H16 Z" fill="#fff" stroke="#2a4a8a" stroke-width="2"/></svg>
<svg class="a" style="left:2809px;top:484px;" width="46" height="48" viewBox="0 0 46 48"><ellipse cx="23" cy="44" rx="16" ry="3" fill="#c8d8e8" opacity="0.7"/><circle cx="23" cy="23" r="19.5" fill="#fafcfe" stroke="#f0a020" stroke-width="4.5"/><circle cx="23" cy="23" r="17" fill="none" stroke="#f8d070" stroke-width="1.2"/><path d="M21 21 L35 10 L25 25 Z" fill="#e83838"/><path d="M25 25 L11 36 L21 21 Z" fill="#3a90e0"/><path d="M13 23 H33 M23 13 V33" stroke="#d0d8e0" stroke-width="1"/><text x="23" y="11.5" font-family="Liberation Sans" font-weight="bold" font-size="9" fill="#1a3a8a" text-anchor="middle">N</text></svg>
<div class="a" style="left:0px;top:1707px;width:2872px;height:49px;background:#efefef"></div>
<div class="a" style="left:0px;top:1707px;width:2872px;height:2px;background:#e4e4e4"></div>
<div class="a" style="left:4px;top:1709px;width:2868px;height:2px;background:#fafafa"></div>
<div class="a" style="left:447px;top:1716px;width:2px;height:40px;background:#d4d4d4"></div>
<div class="a" style="left:449px;top:1716px;width:1px;height:40px;background:#fafafa"></div>
<div class="a" style="left:864px;top:1716px;width:2px;height:40px;background:#d4d4d4"></div>
<div class="a" style="left:866px;top:1716px;width:1px;height:40px;background:#fafafa"></div>
<div class="a" style="left:1465px;top:1716px;width:2px;height:40px;background:#d4d4d4"></div>
<div class="a" style="left:1467px;top:1716px;width:1px;height:40px;background:#fafafa"></div>
<div class="a" style="left:1573px;top:1716px;width:2px;height:40px;background:#d4d4d4"></div>
<div class="a" style="left:1575px;top:1716px;width:1px;height:40px;background:#fafafa"></div>
<div class="a" style="left:1655px;top:1716px;width:2px;height:40px;background:#d4d4d4"></div>
<div class="a" style="left:1657px;top:1716px;width:1px;height:40px;background:#fafafa"></div>
<div class="a" style="left:1697px;top:1716px;width:2px;height:40px;background:#d4d4d4"></div>
<div class="a" style="left:1699px;top:1716px;width:1px;height:40px;background:#fafafa"></div>
<div class="a" style="left:1758px;top:1716px;width:2px;height:40px;background:#d4d4d4"></div>
<div class="a" style="left:1760px;top:1716px;width:1px;height:40px;background:#fafafa"></div>
<div class="a" style="left:2308px;top:1716px;width:2px;height:40px;background:#d4d4d4"></div>
<div class="a" style="left:2310px;top:1716px;width:1px;height:40px;background:#fafafa"></div>
<div class="a" style="left:2463px;top:1716px;width:2px;height:40px;background:#d4d4d4"></div>
<div class="a" style="left:2465px;top:1716px;width:1px;height:40px;background:#fafafa"></div>
<div class="a" style="left:2750px;top:1716px;width:2px;height:40px;background:#d4d4d4"></div>
<div class="a" style="left:2752px;top:1716px;width:1px;height:40px;background:#fafafa"></div>
<div class="t" style="left:22.00px;top:1721.10px;font-size:30px;font-family:'Liberation Sans',sans-serif;font-weight:normal;color:#000;letter-spacing:0.600px;-webkit-text-stroke:0.45px #000;">Seite 1 / 1</div>
<div class="t" style="left:459.00px;top:1721.10px;font-size:30px;font-family:'Liberation Sans',sans-serif;font-weight:normal;color:#000;-webkit-text-stroke:0.45px #000;">Standard</div>
<div class="t" style="left:1008.00px;top:1721.10px;font-size:30px;font-family:'Liberation Sans',sans-serif;font-weight:normal;color:#000;-webkit-text-stroke:0.45px #000;">Deutsch (Deutschland)</div>
<div class="t" style="left:1476.00px;top:1723.64px;font-size:27px;font-family:'Liberation Sans',sans-serif;font-weight:normal;color:#000;letter-spacing:-0.700px;-webkit-text-stroke:0.45px #000;">EINFG</div>
<div class="t" style="left:1583.00px;top:1723.64px;font-size:27px;font-family:'Liberation Sans',sans-serif;font-weight:normal;color:#000;letter-spacing:-0.500px;-webkit-text-stroke:0.45px #000;">STD</div>
<div class="t" style="left:2758.00px;top:1721.95px;font-size:29px;font-family:'Liberation Sans',sans-serif;font-weight:normal;color:#000;letter-spacing:-0.300px;-webkit-text-stroke:0.45px #000;">100 %</div>
<svg class="a" style="left:2325px;top:1722px;" width="20" height="22" viewBox="0 0 20 22"><path d="M1 1 H13 L19 7 V21 H1 Z" fill="#fbfbfb" stroke="#a8a8a8" stroke-width="1.8"/><path d="M13 1 V7 H19" fill="none" stroke="#a8a8a8" stroke-width="1.4"/></svg>
<svg class="a" style="left:2355px;top:1722px;" width="41" height="22" viewBox="0 0 41 22"><path d="M1 1 H13 L19 7 V21 H1 Z" fill="#dde8f4" stroke="#2a7ac8" stroke-width="2"/><path d="M22 1 H34 L40 7 V21 H22 Z" fill="#dde8f4" stroke="#2a7ac8" stroke-width="2"/></svg>
<svg class="a" style="left:2405px;top:1722px;" width="36" height="22" viewBox="0 0 36 22"><path d="M1 5 L5 1 H17 V21 H1 Z" fill="#fbfbfb" stroke="#a8a8a8" stroke-width="1.8"/><path d="M19 1 H30 L35 6 V21 H19 Z" fill="#fbfbfb" stroke="#a8a8a8" stroke-width="1.8"/></svg>
<svg class="a" style="left:2474px;top:1723px;" width="24" height="24" viewBox="0 0 24 24"><circle cx="12" cy="12" r="10.5" fill="#dbe8f4" stroke="#6a7a8a" stroke-width="2"/><rect x="6" y="10.8" width="12" height="2.6" fill="#1a6ab8"/></svg>
<svg class="a" style="left:2711px;top:1723px;" width="25" height="24" viewBox="0 0 25 24"><circle cx="12.5" cy="12" r="10.5" fill="#dbe8f4" stroke="#6a7a8a" stroke-width="2"/><rect x="6.5" y="10.8" width="12" height="2.6" fill="#1a6ab8"/><rect x="11.2" y="6" width="2.6" height="12" fill="#1a6ab8"/></svg>
<div class="a" style="left:2506px;top:1733px;width:194px;height:1.5px;background:#9a9a9a"></div>
<div class="a" style="left:2506px;top:1730px;width:1.5px;height:6px;background:#9a9a9a"></div>
<div class="a" style="left:2544px;top:1726px;width:1.5px;height:17px;background:#b0b0b0"></div>
<svg class="a" style="left:2593px;top:1725px;" width="18" height="20" viewBox="0 0 18 20"><circle cx="9" cy="9.5" r="6.5" fill="#7aa0be" stroke="#3a6282" stroke-width="1.8"/></svg>
</body></html>
